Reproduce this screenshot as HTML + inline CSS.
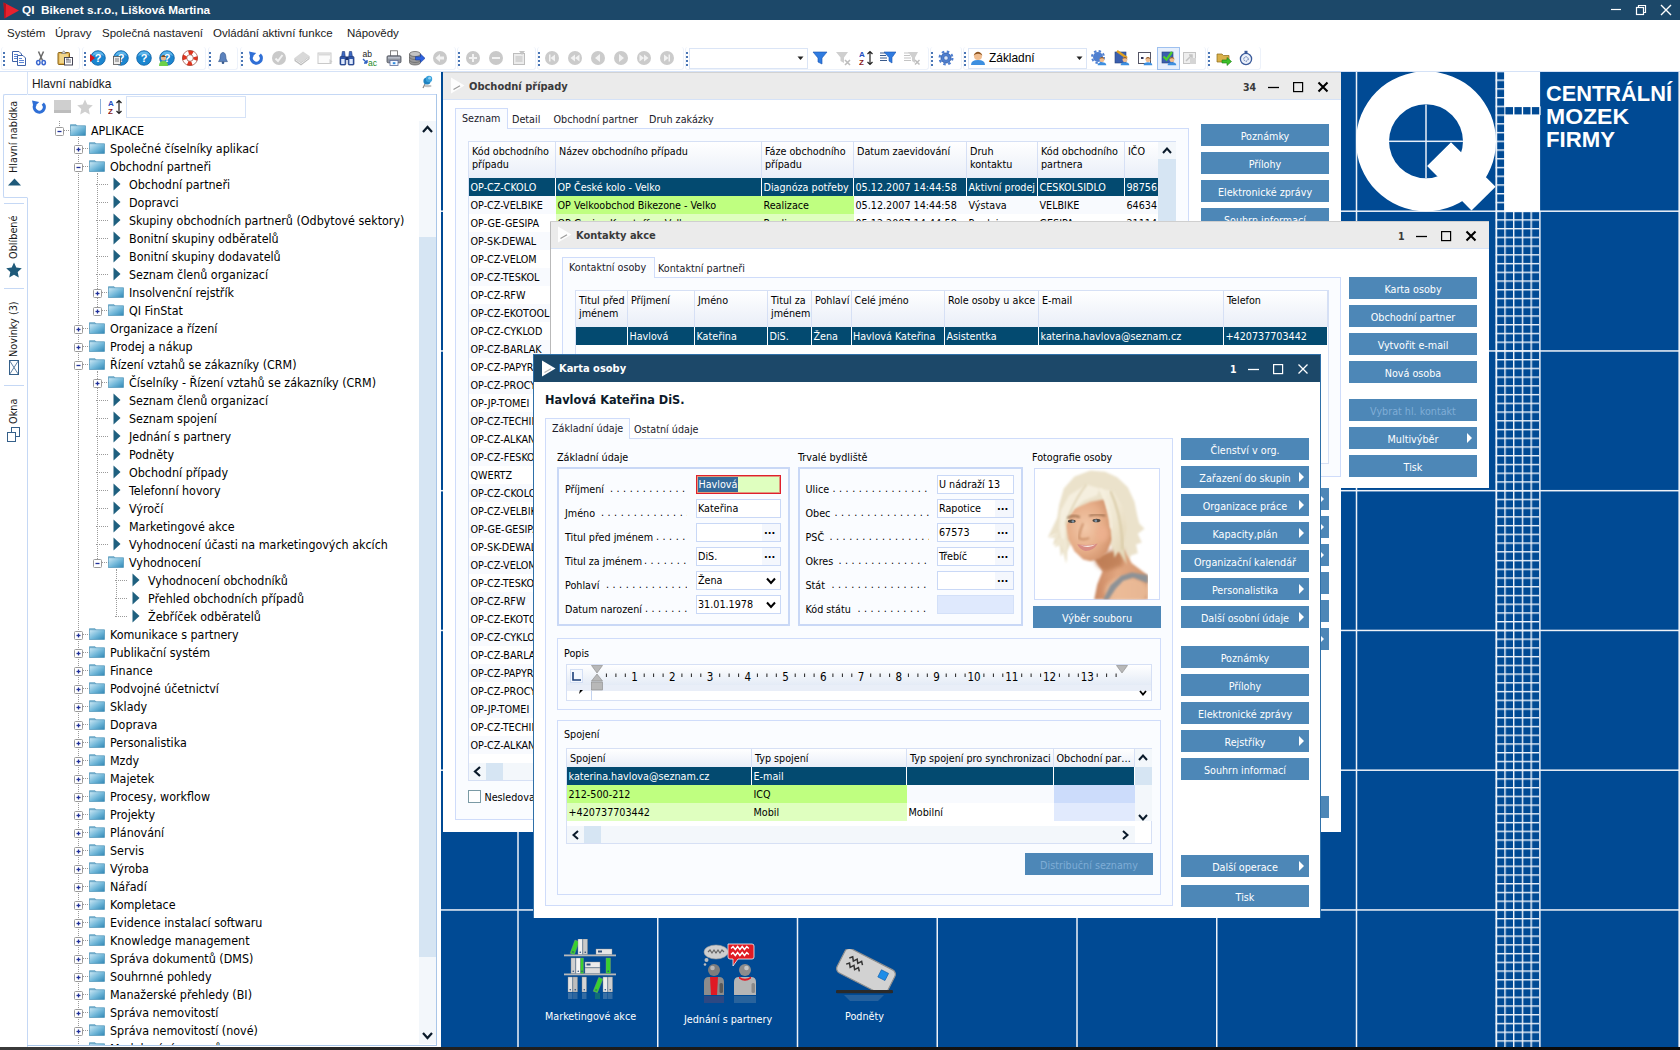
<!DOCTYPE html><html lang="cs"><head><meta charset="utf-8"><title>QI Bikenet s.r.o., Lišková Martina</title><style>
*{box-sizing:border-box;margin:0;padding:0}
html,body{width:1680px;height:1050px;overflow:hidden;background:#fff}
body{font-family:"DejaVu Sans Condensed","Liberation Sans",sans-serif;font-size:10.7px;color:#000;position:relative;line-height:1}
.a{position:absolute}
.t{position:absolute;white-space:nowrap;line-height:14px;height:14px}
.ui{font-family:"Liberation Sans",sans-serif;font-size:11.8px}
.btn{position:absolute;background:#4d87b7;color:#fff;text-align:center;height:22px;line-height:25px;white-space:nowrap;overflow:hidden}
.btn.dis{color:#7fadd6}
.btn i{position:absolute;right:5px;top:6px;width:0;height:0;border-left:5px solid #fff;border-top:5px solid transparent;border-bottom:5px solid transparent}
.win{position:absolute;background:#fff;overflow:hidden}
.pan{position:absolute;background:#fafcff;border:1px solid #cfdcfa}
.tab{position:absolute;background:#fafcff;border:1px solid #cfdcfa;border-bottom:none}
.gb{position:absolute;border:2px solid #c9d8f6;background:#fafcff}
.inp{position:absolute;background:#fff;border:1px solid #c9d8f6;height:19px;line-height:17.5px;padding-left:1px;white-space:nowrap;overflow:hidden}
.hd{position:absolute;background:linear-gradient(#ffffff,#e9eef8);border-right:1px solid #d6e0f5;padding:3px 0 0 3px;line-height:13px;overflow:hidden;white-space:nowrap}
.cell{position:absolute;height:18px;line-height:20px;padding-left:1.5px;white-space:nowrap;overflow:hidden}
.sel{background:#034a70;color:#fff;border-right:1px solid #fff}
.g1{background:#bfff80}
.g2{background:#dfffbf}
.dots{position:absolute;letter-spacing:3.5px;color:#000;white-space:nowrap;overflow:hidden;line-height:14px;height:14px}
</style></head><body>
<div class="a" style="left:0px;top:0px;width:1680px;height:20px;background:#1c4869"></div>
<svg class="a" style="left:2px;top:2px" width="18" height="17" viewBox="0 0 18 17"><path d="M1.5 0.5 L17 8.5 L2.5 16.5 Z" fill="#e8212e"/><path d="M1.5 0.5 L4 1.8 L3.5 15.9 L2.5 16.5Z" fill="#b3121d"/></svg>
<div class="t ui" style="left:22px;top:3px;color:#fff;font-weight:bold;font-size:11.8px">QI&nbsp; Bikenet s.r.o., Lišková Martina</div>
<svg class="a" style="left:1600px;top:0" width="80" height="20" viewBox="0 0 80 20" fill="none" stroke="#fff" stroke-width="1.2"><path d="M11 9.5 H21"/><rect x="36.5" y="7.5" width="7" height="7"/><path d="M38.5 7.5 V5.5 H45.5 V12.5 H43.5"/><path d="M61 5 L71 15 M71 5 L61 15" stroke-width="1.4"/></svg>
<div class="a" style="left:0px;top:20px;width:1680px;height:26px;background:#fff"></div>
<div class="t ui" style="left:7px;top:26px;font-size:11.5px;color:#1a1a1a">Systém</div>
<div class="t ui" style="left:55px;top:26px;font-size:11.5px;color:#1a1a1a">Úpravy</div>
<div class="t ui" style="left:102px;top:26px;font-size:11.5px;color:#1a1a1a">Společná nastavení</div>
<div class="t ui" style="left:213px;top:26px;font-size:11.5px;color:#1a1a1a">Ovládání aktivní funkce</div>
<div class="t ui" style="left:347px;top:26px;font-size:11.5px;color:#1a1a1a">Nápovědy</div>
<div class="a" style="left:0px;top:46px;width:1680px;height:25px;background:#fff"></div>
<div class="a" style="left:0px;top:71px;width:1680px;height:1px;background:#d5e2f7"></div>
<div class="a" style="left:1px;top:47px;width:79px;height:23px;border:1px solid #edf2fa;border-radius:3px;border-top:none;background:#fff"></div>
<div class="a" style="left:82px;top:47px;width:124px;height:23px;border:1px solid #edf2fa;border-radius:3px;border-top:none;background:#fff"></div>
<div class="a" style="left:208px;top:47px;width:30px;height:23px;border:1px solid #edf2fa;border-radius:3px;border-top:none;background:#fff"></div>
<div class="a" style="left:240px;top:47px;width:216px;height:23px;border:1px solid #edf2fa;border-radius:3px;border-top:none;background:#fff"></div>
<div class="a" style="left:457px;top:47px;width:79px;height:23px;border:1px solid #edf2fa;border-radius:3px;border-top:none;background:#fff"></div>
<div class="a" style="left:537px;top:47px;width:147px;height:23px;border:1px solid #edf2fa;border-radius:3px;border-top:none;background:#fff"></div>
<div class="a" style="left:685px;top:47px;width:244px;height:23px;border:1px solid #edf2fa;border-radius:3px;border-top:none;background:#fff"></div>
<div class="a" style="left:930px;top:47px;width:32px;height:23px;border:1px solid #edf2fa;border-radius:3px;border-top:none;background:#fff"></div>
<div class="a" style="left:963px;top:47px;width:243px;height:23px;border:1px solid #edf2fa;border-radius:3px;border-top:none;background:#fff"></div>
<div class="a" style="left:1207px;top:47px;width:54px;height:23px;border:1px solid #edf2fa;border-radius:3px;border-top:none;background:#fff"></div>
<svg class="a" style="left:3px;top:51px" width="3" height="16"><g fill="#4a76b5"><rect x="0" y="1" width="2" height="2"/><rect x="0" y="5" width="2" height="2"/><rect x="0" y="9" width="2" height="2"/><rect x="0" y="13" width="2" height="2"/></g></svg>
<svg class="a" style="left:84px;top:51px" width="3" height="16"><g fill="#4a76b5"><rect x="0" y="1" width="2" height="2"/><rect x="0" y="5" width="2" height="2"/><rect x="0" y="9" width="2" height="2"/><rect x="0" y="13" width="2" height="2"/></g></svg>
<svg class="a" style="left:209px;top:51px" width="3" height="16"><g fill="#4a76b5"><rect x="0" y="1" width="2" height="2"/><rect x="0" y="5" width="2" height="2"/><rect x="0" y="9" width="2" height="2"/><rect x="0" y="13" width="2" height="2"/></g></svg>
<svg class="a" style="left:241px;top:51px" width="3" height="16"><g fill="#4a76b5"><rect x="0" y="1" width="2" height="2"/><rect x="0" y="5" width="2" height="2"/><rect x="0" y="9" width="2" height="2"/><rect x="0" y="13" width="2" height="2"/></g></svg>
<svg class="a" style="left:458px;top:51px" width="3" height="16"><g fill="#4a76b5"><rect x="0" y="1" width="2" height="2"/><rect x="0" y="5" width="2" height="2"/><rect x="0" y="9" width="2" height="2"/><rect x="0" y="13" width="2" height="2"/></g></svg>
<svg class="a" style="left:538px;top:51px" width="3" height="16"><g fill="#4a76b5"><rect x="0" y="1" width="2" height="2"/><rect x="0" y="5" width="2" height="2"/><rect x="0" y="9" width="2" height="2"/><rect x="0" y="13" width="2" height="2"/></g></svg>
<svg class="a" style="left:686px;top:51px" width="3" height="16"><g fill="#4a76b5"><rect x="0" y="1" width="2" height="2"/><rect x="0" y="5" width="2" height="2"/><rect x="0" y="9" width="2" height="2"/><rect x="0" y="13" width="2" height="2"/></g></svg>
<svg class="a" style="left:931px;top:51px" width="3" height="16"><g fill="#4a76b5"><rect x="0" y="1" width="2" height="2"/><rect x="0" y="5" width="2" height="2"/><rect x="0" y="9" width="2" height="2"/><rect x="0" y="13" width="2" height="2"/></g></svg>
<svg class="a" style="left:964px;top:51px" width="3" height="16"><g fill="#4a76b5"><rect x="0" y="1" width="2" height="2"/><rect x="0" y="5" width="2" height="2"/><rect x="0" y="9" width="2" height="2"/><rect x="0" y="13" width="2" height="2"/></g></svg>
<svg class="a" style="left:1208px;top:51px" width="3" height="16"><g fill="#4a76b5"><rect x="0" y="1" width="2" height="2"/><rect x="0" y="5" width="2" height="2"/><rect x="0" y="9" width="2" height="2"/><rect x="0" y="13" width="2" height="2"/></g></svg>
<svg class="a" style="left:11.0px;top:50.0px" width="16" height="16" viewBox="0 0 16 16"><path d="M1.5 1.5 H8 L10.5 4 V11.5 H1.5Z" fill="#fff" stroke="#3f62a8"/><path d="M3 4.5h4M3 6.5h6M3 8.5h6" stroke="#5b85d6"/><path d="M6.5 5.5 H12 L14.5 8 V15.5 H6.5Z" fill="#fff" stroke="#3f62a8"/><path d="M8 8.5h3M8 10.5h5M8 12.5h5" stroke="#5b85d6"/></svg>
<svg class="a" style="left:33.0px;top:50.0px" width="16" height="16" viewBox="0 0 16 16"><path d="M5.5 1.5 L9.5 10.5 M10.5 1.5 L6.5 10.5" stroke="#6a6a6a" stroke-width="1.5" fill="none"/><ellipse cx="5.3" cy="12.6" rx="1.7" ry="2.2" fill="none" stroke="#3a67cf" stroke-width="1.5"/><ellipse cx="10.7" cy="12.6" rx="1.7" ry="2.2" fill="none" stroke="#3a67cf" stroke-width="1.5"/></svg>
<svg class="a" style="left:57.0px;top:50.0px" width="16" height="16" viewBox="0 0 16 16"><rect x="1" y="2.5" width="11.5" height="12" rx="1" fill="#e0b050" stroke="#8a6417"/><rect x="2.5" y="4" width="8.5" height="9" fill="#f0d58a"/><path d="M4.5 3.5 L6.7 0.8 L9 3.5Z" fill="#ddd" stroke="#777" stroke-width=".7"/><rect x="7.5" y="7.5" width="8" height="7.5" fill="#fff" stroke="#445"/><path d="M9 10h5M9 12h5" stroke="#667" /><rect x="9" y="8.6" width="3" height="1" fill="#667"/></svg>
<svg class="a" style="left:90.0px;top:50.0px" width="16" height="16" viewBox="0 0 16 16"><defs></defs><circle cx="8" cy="8" r="7.3" fill="#1b86d0"/><circle cx="8" cy="8" r="7.3" fill="none" stroke="#0d5fa3" stroke-width="0.8"/><path d="M2 6 A6.3 6.3 0 0 1 14 6 A9 5 0 0 0 2 6Z" fill="#6fc0f0" opacity=".8"/><text x="8" y="12" font-family="Liberation Sans" font-weight="bold" font-size="11" fill="#fff" text-anchor="middle">?</text><path d="M0 4 L0 12 L5 8Z" fill="#d8141c"/></svg>
<svg class="a" style="left:113.0px;top:50.0px" width="16" height="16" viewBox="0 0 16 16"><defs></defs><circle cx="8" cy="8" r="7.3" fill="#1b86d0"/><circle cx="8" cy="8" r="7.3" fill="none" stroke="#0d5fa3" stroke-width="0.8"/><path d="M2 6 A6.3 6.3 0 0 1 14 6 A9 5 0 0 0 2 6Z" fill="#6fc0f0" opacity=".8"/><text x="8" y="12" font-family="Liberation Sans" font-weight="bold" font-size="11" fill="#fff" text-anchor="middle">?</text><rect x="0.5" y="6.5" width="7" height="8" fill="#eee" stroke="#555" stroke-width=".8"/><path d="M2 9h4M2 11h4" stroke="#555" stroke-width=".8"/></svg>
<svg class="a" style="left:136.0px;top:50.0px" width="16" height="16" viewBox="0 0 16 16"><defs></defs><circle cx="8" cy="8" r="7.3" fill="#1b86d0"/><circle cx="8" cy="8" r="7.3" fill="none" stroke="#0d5fa3" stroke-width="0.8"/><path d="M2 6 A6.3 6.3 0 0 1 14 6 A9 5 0 0 0 2 6Z" fill="#6fc0f0" opacity=".8"/><text x="8" y="12" font-family="Liberation Sans" font-weight="bold" font-size="11" fill="#fff" text-anchor="middle">?</text></svg>
<svg class="a" style="left:159.0px;top:50.0px" width="16" height="16" viewBox="0 0 16 16"><defs></defs><circle cx="8" cy="8" r="7.3" fill="#1b86d0"/><circle cx="8" cy="8" r="7.3" fill="none" stroke="#0d5fa3" stroke-width="0.8"/><path d="M2 6 A6.3 6.3 0 0 1 14 6 A9 5 0 0 0 2 6Z" fill="#6fc0f0" opacity=".8"/><text x="8" y="12" font-family="Liberation Sans" font-weight="bold" font-size="11" fill="#fff" text-anchor="middle">?</text><circle cx="4.5" cy="8" r="2.6" fill="#e8b58a"/><path d="M0 16 Q0 11 4.5 11 Q9 11 9 16Z" fill="#6dd04a"/><path d="M2 7 Q4.5 3 7 7" fill="#7a4a20"/></svg>
<svg class="a" style="left:182.0px;top:50.0px" width="16" height="16" viewBox="0 0 16 16"><circle cx="8" cy="8" r="5.5" fill="none" stroke="#fff" stroke-width="4.2"/><circle cx="8" cy="8" r="5.5" fill="none" stroke="#e0341f" stroke-width="4.2" stroke-dasharray="4.32 4.32" stroke-dashoffset="2.16"/><circle cx="8" cy="8" r="7.6" fill="none" stroke="#8a2a1a" stroke-width=".6"/><circle cx="8" cy="8" r="3.3" fill="none" stroke="#8a2a1a" stroke-width=".6"/></svg>
<svg class="a" style="left:215.0px;top:50.0px" width="16" height="16" viewBox="0 0 16 16"><path d="M8 2.5 C5.2 2.5 5.2 6.5 5 9 L3.6 11.6 H12.4 L11 9 C10.8 6.5 10.8 2.5 8 2.5Z" fill="#5b82bd" stroke="#35598f" stroke-width=".7"/><circle cx="8" cy="12.8" r="1.3" fill="#35598f"/></svg>
<svg class="a" style="left:248.0px;top:50.0px" width="16" height="16" viewBox="0 0 16 16"><path d="M4.3 5.2 A5 5 0 1 0 11.8 4.6" fill="none" stroke="#2f6fd6" stroke-width="3.2"/><path d="M1 1.5 L8.2 3 L2.6 8.4Z" fill="#2f6fd6"/></svg>
<svg class="a" style="left:271.0px;top:50.0px" width="16" height="16" viewBox="0 0 16 16"><circle cx="8" cy="8" r="7" fill="#c9c9c9"/><path d="M4.5 8.5 L7 11 L11.5 5" stroke="#f2f2f2" stroke-width="2" fill="none"/></svg>
<svg class="a" style="left:294.0px;top:50.0px" width="16" height="16" viewBox="0 0 16 16"><path d="M0.5 8 L9 1.5 L15.5 6 L7 12.5Z" fill="#d9d9d9"/><path d="M0.5 8 L7 12.5 L15.5 6 V9 L7 15.5 L0.5 11Z" fill="#bdbdbd"/><path d="M1.5 9.7 L7 13.6 L14.8 7.8" stroke="#ececec" stroke-width="1" fill="none"/></svg>
<svg class="a" style="left:317.0px;top:50.0px" width="16" height="16" viewBox="0 0 16 16"><rect x="1" y="3" width="13" height="10.5" fill="#fbfbfb" stroke="#c9c9c9"/><rect x="1.5" y="3.5" width="12" height="2" fill="#d9d9d9"/><path d="M12.5 9 L15.5 11.5 L12.5 14Z" fill="#cfcfcf"/></svg>
<svg class="a" style="left:339.0px;top:50.0px" width="16" height="16" viewBox="0 0 16 16"><rect x="1" y="6.5" width="5.8" height="8.5" rx="1" fill="#2f55a8" stroke="#1b3474" stroke-width=".7"/><rect x="9.2" y="6.5" width="5.8" height="8.5" rx="1" fill="#2f55a8" stroke="#1b3474" stroke-width=".7"/><path d="M2.6 6.5 L3.4 1.5 H5.6 L6.2 6.5Z M9.8 6.5 L10.4 1.5 H12.6 L13.4 6.5Z" fill="#3f6ac4" stroke="#1b3474" stroke-width=".6"/><rect x="6.6" y="6.5" width="2.8" height="3.5" fill="#1b3474"/><rect x="2.2" y="9" width="3.4" height="5" fill="#dfe9fb"/><rect x="10.4" y="9" width="3.4" height="5" fill="#dfe9fb"/></svg>
<svg class="a" style="left:362.0px;top:50.0px" width="16" height="16" viewBox="0 0 16 16"><text x="0.5" y="7" font-family="Liberation Sans" font-size="8.5" fill="#222">ab</text><text x="6" y="15.5" font-family="Liberation Sans" font-size="8.5" fill="#1a8a2a">ac</text><path d="M1 9 L5 13 M5 13 V10 M5 13 H2" stroke="#2f62c4" stroke-width="1.4" fill="none"/></svg>
<svg class="a" style="left:386.0px;top:50.0px" width="16" height="16" viewBox="0 0 16 16"><rect x="4.5" y="0.8" width="7" height="5.5" fill="#fff" stroke="#666" stroke-width=".8"/><rect x="1" y="5.8" width="14" height="7" rx="1.2" fill="#8f949e" stroke="#4a4e58" stroke-width=".8"/><rect x="2" y="7" width="12" height="1.6" fill="#b9bec8"/><rect x="4" y="10.5" width="8" height="5" fill="#f4f8ff" stroke="#5a6a9a" stroke-width=".8"/><rect x="6.8" y="12.2" width="2.6" height="2" fill="#2f8ae0"/></svg>
<svg class="a" style="left:409.0px;top:50.0px" width="16" height="16" viewBox="0 0 16 16"><path d="M0.5 4 V12.5 A5.5 2.5 0 0 0 11.5 12.5 V4" fill="#9a9a9a" stroke="#5a5a5a" stroke-width=".7"/><ellipse cx="6" cy="4" rx="5.5" ry="2.5" fill="#c4c4c4" stroke="#5a5a5a" stroke-width=".7"/><path d="M0.5 7 A5.5 2.5 0 0 0 11.5 7 M0.5 10 A5.5 2.5 0 0 0 11.5 10" fill="none" stroke="#666" stroke-width=".7"/><path d="M6.5 6.7 H11.5 V4 L16 8.3 L11.5 12.6 V10 H6.5Z" fill="#2d62e0" stroke="#143a9a" stroke-width=".6"/></svg>
<svg class="a" style="left:432.0px;top:50.0px" width="16" height="16" viewBox="0 0 16 16"><circle cx="8" cy="8" r="7" fill="#c9c9c9"/><path d="M3.5 8 L8 4 V6.5 H12 V9.5 H8 V12Z" fill="#f2f2f2"/></svg>
<svg class="a" style="left:465.0px;top:50.0px" width="16" height="16" viewBox="0 0 16 16"><circle cx="8" cy="8" r="7" fill="#c9c9c9"/><path d="M4 8H12M8 4V12" stroke="#f2f2f2" stroke-width="2"/></svg>
<svg class="a" style="left:488.0px;top:50.0px" width="16" height="16" viewBox="0 0 16 16"><circle cx="8" cy="8" r="7" fill="#c9c9c9"/><path d="M4 8H12" stroke="#f2f2f2" stroke-width="2"/></svg>
<svg class="a" style="left:511.0px;top:50.0px" width="16" height="16" viewBox="0 0 16 16"><rect x="2.5" y="3.5" width="11" height="11" fill="#ececec" stroke="#bdbdbd"/><path d="M4.5 7h7M4.5 9h7M4.5 11h7" stroke="#bdbdbd"/><path d="M8 1 L14 1 L11 5Z" fill="#c4c4c4"/></svg>
<svg class="a" style="left:544.0px;top:50.0px" width="16" height="16" viewBox="0 0 16 16"><circle cx="8" cy="8" r="7" fill="#cbcbcb"/><path d="M11 4.5 V11.5 L6.5 8Z" fill="#f2f2f2"/><rect x="5" y="4.5" width="1.5" height="7" fill="#f2f2f2"/></svg>
<svg class="a" style="left:567.0px;top:50.0px" width="16" height="16" viewBox="0 0 16 16"><circle cx="8" cy="8" r="7" fill="#cbcbcb"/><path d="M8 4.5 V11.5 L3.5 8Z M12.5 4.5 V11.5 L8 8Z" fill="#f2f2f2"/></svg>
<svg class="a" style="left:590.0px;top:50.0px" width="16" height="16" viewBox="0 0 16 16"><circle cx="8" cy="8" r="7" fill="#cbcbcb"/><path d="M10 4 V12 L5 8Z" fill="#f2f2f2"/></svg>
<svg class="a" style="left:613.0px;top:50.0px" width="16" height="16" viewBox="0 0 16 16"><circle cx="8" cy="8" r="7" fill="#cbcbcb"/><path d="M6 4 V12 L11 8Z" fill="#f2f2f2"/></svg>
<svg class="a" style="left:636.0px;top:50.0px" width="16" height="16" viewBox="0 0 16 16"><circle cx="8" cy="8" r="7" fill="#cbcbcb"/><path d="M8 4.5 V11.5 L12.5 8Z M3.5 4.5 V11.5 L8 8Z" fill="#f2f2f2"/></svg>
<svg class="a" style="left:659.0px;top:50.0px" width="16" height="16" viewBox="0 0 16 16"><circle cx="8" cy="8" r="7" fill="#cbcbcb"/><path d="M5 4.5 V11.5 L9.5 8Z" fill="#f2f2f2"/><rect x="9.5" y="4.5" width="1.5" height="7" fill="#f2f2f2"/></svg>
<div class="a" style="left:689px;top:48px;width:119px;height:21px;border:1px solid #dbe5f6;background:#fff"></div>
<svg class="a" style="left:797px;top:56px" width="8" height="5"><path d="M0.5 0.5 H6.5 L3.5 4Z" fill="#222"/></svg>
<svg class="a" style="left:812.0px;top:50.0px" width="16" height="16" viewBox="0 0 16 16"><path d="M1 2 H15 L10 8 V14 L6 12 V8Z" fill="#2f7be0" stroke="#1552b0" stroke-width=".6"/></svg>
<svg class="a" style="left:835.0px;top:50.0px" width="16" height="16" viewBox="0 0 16 16"><path d="M1 2 H13 L9 7.5 V13 L5.5 11 V7.5Z" fill="#cfcfcf"/><path d="M10 10 L15 15 M15 10 L10 15" stroke="#bdbdbd" stroke-width="1.6"/></svg>
<svg class="a" style="left:859.0px;top:50.0px" width="16" height="16" viewBox="0 0 16 16"><text x="0" y="7" font-family="Liberation Sans" font-weight="bold" font-size="8" fill="#1f4fc0">A</text><text x="0" y="15" font-family="Liberation Sans" font-weight="bold" font-size="8" fill="#8a1a1a">Z</text><path d="M11 1.5 V14.5 M8.5 4 L11 1.5 L13.5 4 M8.5 12 L11 14.5 L13.5 12" stroke="#222" stroke-width="1.2" fill="none"/></svg>
<svg class="a" style="left:880.0px;top:50.0px" width="16" height="16" viewBox="0 0 16 16"><path d="M4 2 H16 L12 7.5 V13 L9 11 V7.5Z" fill="#2f7be0" stroke="#1552b0" stroke-width=".6"/><path d="M0 3h5M0 5.5h6M0 8h7M0 10.5h7" stroke="#3a5a8a" stroke-width="1.2"/></svg>
<svg class="a" style="left:904.0px;top:50.0px" width="16" height="16" viewBox="0 0 16 16"><path d="M4 2 H14 L11 7.5 V13 L8 11 V7.5Z" fill="#cfcfcf"/><path d="M0 3h5M0 5.5h6M0 8h7M0 10.5h7" stroke="#c4c4c4" stroke-width="1.2"/><path d="M11 10 L15.5 14.5 M15.5 10 L11 14.5" stroke="#bdbdbd" stroke-width="1.5"/></svg>
<svg class="a" style="left:938.0px;top:50.0px" width="16" height="16" viewBox="0 0 16 16"><circle cx="8" cy="8" r="5" fill="#4f7fd0" stroke="#2a55a0" stroke-width=".8"/><circle cx="8" cy="8" r="6.4" fill="none" stroke="#4f7fd0" stroke-width="2.2" stroke-dasharray="2.5 2.53"/><circle cx="8" cy="8" r="2.2" fill="#dbe7fa" stroke="#2a55a0" stroke-width=".6"/></svg>
<div class="a" style="left:968px;top:48px;width:119px;height:21px;border:1px solid #dbe5f6;background:#fff"></div>
<svg class="a" style="left:970.0px;top:50.0px" width="16" height="16" viewBox="0 0 16 16"><circle cx="8" cy="6" r="4" fill="#f0bd8f"/><path d="M3.5 5.5 Q8 -2 12.5 5.5 Q10 3.5 8 3.8 Q6 3.5 3.5 5.5Z" fill="#8a5320"/><path d="M1 15 Q1 10 8 10 Q15 10 15 15Z" fill="#3d8fe0"/></svg>
<div class="t ui" style="left:989px;top:51px;font-size:11.9px">Základní</div>
<svg class="a" style="left:1076px;top:56px" width="8" height="5"><path d="M0.5 0.5 H6.5 L3.5 4Z" fill="#222"/></svg>
<svg class="a" style="left:1091.0px;top:50.0px" width="16" height="16" viewBox="0 0 16 16"><circle cx="7" cy="7" r="5" fill="#4f7fd0"/><circle cx="7" cy="7" r="6" fill="none" stroke="#4f7fd0" stroke-width="2" stroke-dasharray="2.4 2.3"/><g transform="translate(6,6) scale(.62)"><circle cx="8" cy="6" r="4" fill="#f0bd8f"/><path d="M3.5 5.5 Q8 -2 12.5 5.5 Q10 3.5 8 3.8 Q6 3.5 3.5 5.5Z" fill="#8a5320"/><path d="M1 15 Q1 10 8 10 Q15 10 15 15Z" fill="#3d8fe0"/></g></svg>
<svg class="a" style="left:1114.0px;top:50.0px" width="16" height="16" viewBox="0 0 16 16"><rect x="1" y="2" width="11" height="11" fill="#3b5fae" stroke="#24407e" stroke-width=".6"/><path d="M3 1 L13 8" stroke="#e0a020" stroke-width="2.4"/><g transform="translate(6,6) scale(.62)"><circle cx="8" cy="6" r="4" fill="#f0bd8f"/><path d="M3.5 5.5 Q8 -2 12.5 5.5 Q10 3.5 8 3.8 Q6 3.5 3.5 5.5Z" fill="#8a5320"/><path d="M1 15 Q1 10 8 10 Q15 10 15 15Z" fill="#3d8fe0"/></g></svg>
<svg class="a" style="left:1137.0px;top:50.0px" width="16" height="16" viewBox="0 0 16 16"><rect x="1.5" y="2.5" width="12" height="11" fill="#fff" stroke="#556" /><rect x="4" y="7" width="2.5" height="2" fill="#335"/><g transform="translate(6,6) scale(.62)"><circle cx="8" cy="6" r="4" fill="#f0bd8f"/><path d="M3.5 5.5 Q8 -2 12.5 5.5 Q10 3.5 8 3.8 Q6 3.5 3.5 5.5Z" fill="#8a5320"/><path d="M1 15 Q1 10 8 10 Q15 10 15 15Z" fill="#3d8fe0"/></g></svg>
<div class="a" style="left:1157px;top:47px;width:23px;height:23px;border:1px solid #9ec0ef;background:#e6effc"></div>
<svg class="a" style="left:1161.0px;top:50.0px" width="16" height="16" viewBox="0 0 16 16"><rect x="1" y="2" width="11" height="11" fill="#3b5fae" stroke="#24407e" stroke-width=".6"/><path d="M2.5 6.5 L5.5 9.5 L11 2" stroke="#4bd02a" stroke-width="2.2" fill="none"/><g transform="translate(6,6) scale(.62)"><circle cx="8" cy="6" r="4" fill="#f0bd8f"/><path d="M3.5 5.5 Q8 -2 12.5 5.5 Q10 3.5 8 3.8 Q6 3.5 3.5 5.5Z" fill="#8a5320"/><path d="M1 15 Q1 10 8 10 Q15 10 15 15Z" fill="#3d8fe0"/></g></svg>
<svg class="a" style="left:1182.0px;top:50.0px" width="16" height="16" viewBox="0 0 16 16"><rect x="1.5" y="2.5" width="12" height="11" fill="#eee" stroke="#c4c4c4"/><path d="M4 11 L10 5 M7 5 H10 V8" stroke="#c4c4c4" stroke-width="1.5" fill="none"/><rect x="8" y="8" width="6" height="6" fill="#d5d5d5"/></svg>
<svg class="a" style="left:1216.0px;top:50.0px" width="16" height="16" viewBox="0 0 16 16"><path d="M1 4 H6 L7.5 5.5 H13 V12 H1Z" fill="#d9b04a" stroke="#8a6a17" stroke-width=".7"/><path d="M6 10 H11 V7.5 L15.5 11.5 L11 15.5 V13 H6Z" fill="#3cc02a" stroke="#1a7a12" stroke-width=".6"/></svg>
<svg class="a" style="left:1238.0px;top:50.0px" width="16" height="16" viewBox="0 0 16 16"><circle cx="8" cy="9" r="5.6" fill="#eaf0fa" stroke="#3a5a9a" stroke-width="1.3"/><rect x="6.5" y="0.8" width="3" height="2.4" fill="#3a5a9a"/><circle cx="8" cy="9" r="2.2" fill="none" stroke="#3a5a9a" stroke-width="1" stroke-dasharray="1.2 1"/></svg>
<div class="a" style="left:0px;top:72px;width:441px;height:975px;background:#fff"></div>
<div class="t ui" style="left:32px;top:77px;font-size:11.9px;color:#1a1a1a">Hlavní nabídka</div>
<div class="a" style="left:27px;top:72px;width:1px;height:22px;background:#d5e2f7"></div>
<div class="a" style="left:27px;top:94px;width:410px;height:1px;background:#c5d8f5"></div>
<svg class="a" style="left:422px;top:75px" width="12" height="14" viewBox="0 0 12 14"><path d="M3 9 L1 13" stroke="#888" stroke-width="1.2"/><ellipse cx="6" cy="11" rx="3.5" ry="1.2" fill="#999" opacity=".6"/><circle cx="5" cy="6" r="3.6" fill="#1f82c0"/><circle cx="7" cy="4" r="3.2" fill="#3aa2dc"/><circle cx="7.6" cy="3.2" r="1.4" fill="#8fd0f2"/></svg>
<div class="a" style="left:27px;top:94px;width:1px;height:953px;background:#c5d8f5"></div>
<div class="a" style="left:436px;top:94px;width:1px;height:952px;background:#a9c6e8"></div>
<div class="a" style="left:27px;top:1045px;width:410px;height:1px;background:#a9c6e8"></div>
<div class="a" style="left:3px;top:94px;width:25px;height:104px;border:1px solid #c5d8f5;border-right:1px solid #fff;background:#fff;border-radius:2px 0 0 2px"></div>
<div class="t" style="left:14px;top:173px;transform-origin:0 0;transform:rotate(-90deg) translate(0,-7px);font-size:10.8px;color:#1a1a1a;">Hlavní nabídka</div>
<svg class="a" style="left:8px;top:178px" width="13" height="8"><path d="M0 7.5 L6.5 0.5 L13 7.5Z" fill="#1f5a7a"/></svg>
<div class="a" style="left:4px;top:203px;width:20px;height:1px;background:#c5d8f5"></div>
<div class="a" style="left:4px;top:288px;width:20px;height:1px;background:#c5d8f5"></div>
<div class="a" style="left:4px;top:385px;width:20px;height:1px;background:#c5d8f5"></div>
<div class="t" style="left:14px;top:259px;transform-origin:0 0;transform:rotate(-90deg) translate(0,-7px);font-size:10.8px;color:#1a1a1a;">Oblíbené</div>
<svg class="a" style="left:6px;top:262px" width="16" height="16" viewBox="0 0 16 16"><path d="M8 0.5 L10.3 5.6 L15.8 6.2 L11.7 10 L12.8 15.5 L8 12.7 L3.2 15.5 L4.3 10 L0.2 6.2 L5.7 5.6Z" fill="#1f5a7a"/></svg>
<div class="t" style="left:14px;top:357px;transform-origin:0 0;transform:rotate(-90deg) translate(0,-7px);font-size:10.8px;color:#1a1a1a;">Novinky (3)</div>
<svg class="a" style="left:9px;top:360px" width="10" height="15" viewBox="0 0 10 15"><rect x=".5" y=".5" width="9" height="14" fill="#fff" stroke="#35608a"/><path d="M.5 .5 L5 7.5 L.5 14.5 M9.5 .5 L5 7.5 L9.5 14.5" fill="none" stroke="#35608a" stroke-width=".8"/></svg>
<div class="t" style="left:14px;top:424px;transform-origin:0 0;transform:rotate(-90deg) translate(0,-7px);font-size:10.8px;color:#1a1a1a;">Okna</div>
<svg class="a" style="left:7px;top:427px" width="14" height="16" viewBox="0 0 14 16"><rect x="4.5" y=".5" width="8" height="9" fill="#fff" stroke="#35608a"/><rect x=".5" y="5.5" width="8" height="9" fill="#fff" stroke="#35608a"/></svg>
<svg class="a" style="left:31px;top:99px" width="16" height="16" viewBox="0 0 16 16"><path d="M4.3 5.2 A5 5 0 1 0 11.8 4.6" fill="none" stroke="#2f6fd6" stroke-width="3.2"/><path d="M1 1.5 L8.2 3 L2.6 8.4Z" fill="#2f6fd6"/></svg>
<svg class="a" style="left:54px;top:100px" width="17" height="14" viewBox="0 0 17 14"><rect x="0" y="0" width="17" height="13" fill="#cfcfcf"/><rect x="0" y="10" width="17" height="3" fill="#bdbdbd"/></svg>
<svg class="a" style="left:77px;top:99px" width="16" height="16" viewBox="0 0 16 16"><path d="M8 0.5 L10.3 5.6 L15.8 6.2 L11.7 10 L12.8 15.5 L8 12.7 L3.2 15.5 L4.3 10 L0.2 6.2 L5.7 5.6Z" fill="#d0d0d0"/></svg>
<div class="a" style="left:100px;top:99px;width:1px;height:15px;background:#8fb0d8"></div>
<svg class="a" style="left:108px;top:99px" width="16" height="16" viewBox="0 0 16 16"><text x="0" y="7" font-family="Liberation Sans" font-weight="bold" font-size="8" fill="#1f4fc0">A</text><text x="0" y="15" font-family="Liberation Sans" font-weight="bold" font-size="8" fill="#8a1a1a">Z</text><path d="M11 1.5 V14.5 M8.5 4 L11 1.5 L13.5 4 M8.5 12 L11 14.5 L13.5 12" stroke="#222" stroke-width="1.2" fill="none"/></svg>
<div class="a" style="left:126px;top:96px;width:120px;height:22px;border:1px solid #d5e2f7;background:#fff"></div>
<div class="a" style="left:419px;top:121px;width:17px;height:923px;background:#f3f7fb"></div>
<div class="a" style="left:419px;top:237px;width:17px;height:720px;background:#d6e5f3"></div>
<svg class="a" style="left:422px;top:125px" width="11" height="8"><path d="M1 7 L5.5 2 L10 7" fill="none" stroke="#0a1a2a" stroke-width="2.2"/></svg>
<svg class="a" style="left:422px;top:1032px" width="11" height="8"><path d="M1 1 L5.5 6 L10 1" fill="none" stroke="#0a1a2a" stroke-width="2.2"/></svg>
<svg width="0" height="0" style="position:absolute"><defs><linearGradient id="fg" x1="0" y1="0" x2="1" y2="1"><stop offset="0" stop-color="#cfeaf6"/><stop offset=".55" stop-color="#6fb6d8"/><stop offset="1" stop-color="#2f86b4"/></linearGradient></defs></svg>
<div class="a" style="left:28px;top:72px;width:391px;height:973px;overflow:hidden"><div class="a" style="left:-28px;top:0px"><div class="a" style="left:59px;top:49px;width:0;height:5px;border-left:1px dotted #9a9a9a"></div><div class="a" style="left:78px;top:65px;width:0;height:907px;border-left:1px dotted #9a9a9a"></div><div class="a" style="left:97px;top:101px;width:0;height:138px;border-left:1px dotted #9a9a9a"></div><div class="a" style="left:97px;top:299px;width:0;height:192px;border-left:1px dotted #9a9a9a"></div><div class="a" style="left:116px;top:497px;width:0;height:48px;border-left:1px dotted #9a9a9a"></div><div class="a" style="left:63px;top:58px;width:8px;height:0;border-top:1px dotted #9a9a9a"></div><svg class="a"  style="left:55px;top:55px" width="9" height="9" viewBox="0 0 9 9"><rect x=".5" y=".5" width="8" height="8" rx="1" fill="#fff" stroke="#9a9a9a"/><path d="M2.5 4.5 H6.5" stroke="#1f2f9a" stroke-width="1.3"/></svg><svg class="a" style="left:70px;top:51px" width="16" height="13" viewBox="0 0 16 13"><path d="M0.5 1.5 H6 L7 3 H0.5Z" fill="#a9d3e8" stroke="#5f9fc0" stroke-width=".6"/><rect x="0.5" y="2.8" width="15" height="9.7" fill="url(#fg)" stroke="#4f94b8" stroke-width=".7"/></svg><div class="t" style="left:91px;top:50px;font-size:12.4px;line-height:17px;height:16px">APLIKACE</div><div class="a" style="left:82px;top:76px;width:8px;height:0;border-top:1px dotted #9a9a9a"></div><svg class="a"  style="left:74px;top:73px" width="9" height="9" viewBox="0 0 9 9"><rect x=".5" y=".5" width="8" height="8" rx="1" fill="#fff" stroke="#9a9a9a"/><path d="M2.5 4.5 H6.5" stroke="#1f2f9a" stroke-width="1.3"/><path d="M4.5 2.5 V6.5" stroke="#1f2f9a" stroke-width="1.3"/></svg><svg class="a" style="left:89px;top:69px" width="16" height="13" viewBox="0 0 16 13"><path d="M0.5 1.5 H6 L7 3 H0.5Z" fill="#a9d3e8" stroke="#5f9fc0" stroke-width=".6"/><rect x="0.5" y="2.8" width="15" height="9.7" fill="url(#fg)" stroke="#4f94b8" stroke-width=".7"/></svg><div class="t" style="left:110px;top:68px;font-size:12.4px;line-height:17px;height:16px">Společné číselníky aplikací</div><div class="a" style="left:82px;top:94px;width:8px;height:0;border-top:1px dotted #9a9a9a"></div><svg class="a"  style="left:74px;top:91px" width="9" height="9" viewBox="0 0 9 9"><rect x=".5" y=".5" width="8" height="8" rx="1" fill="#fff" stroke="#9a9a9a"/><path d="M2.5 4.5 H6.5" stroke="#1f2f9a" stroke-width="1.3"/></svg><svg class="a" style="left:89px;top:87px" width="16" height="13" viewBox="0 0 16 13"><path d="M0.5 1.5 H6 L7 3 H0.5Z" fill="#a9d3e8" stroke="#5f9fc0" stroke-width=".6"/><rect x="0.5" y="2.8" width="15" height="9.7" fill="url(#fg)" stroke="#4f94b8" stroke-width=".7"/></svg><div class="t" style="left:110px;top:86px;font-size:12.4px;line-height:17px;height:16px">Obchodní partneři</div><svg class="a" style="left:113px;top:105px" width="8" height="14"><path d="M0.5 0.5 L7.5 7 L0.5 13.5Z" fill="#1f607f"/></svg><div class="a" style="left:96px;top:112px;width:12px;height:0;border-top:1px dotted #9a9a9a"></div><div class="t" style="left:129px;top:104px;font-size:12.4px;line-height:17px;height:16px">Obchodní partneři</div><svg class="a" style="left:113px;top:123px" width="8" height="14"><path d="M0.5 0.5 L7.5 7 L0.5 13.5Z" fill="#1f607f"/></svg><div class="a" style="left:96px;top:130px;width:12px;height:0;border-top:1px dotted #9a9a9a"></div><div class="t" style="left:129px;top:122px;font-size:12.4px;line-height:17px;height:16px">Dopravci</div><svg class="a" style="left:113px;top:141px" width="8" height="14"><path d="M0.5 0.5 L7.5 7 L0.5 13.5Z" fill="#1f607f"/></svg><div class="a" style="left:96px;top:148px;width:12px;height:0;border-top:1px dotted #9a9a9a"></div><div class="t" style="left:129px;top:140px;font-size:12.4px;line-height:17px;height:16px">Skupiny obchodních partnerů (Odbytové sektory)</div><svg class="a" style="left:113px;top:159px" width="8" height="14"><path d="M0.5 0.5 L7.5 7 L0.5 13.5Z" fill="#1f607f"/></svg><div class="a" style="left:96px;top:166px;width:12px;height:0;border-top:1px dotted #9a9a9a"></div><div class="t" style="left:129px;top:158px;font-size:12.4px;line-height:17px;height:16px">Bonitní skupiny odběratelů</div><svg class="a" style="left:113px;top:177px" width="8" height="14"><path d="M0.5 0.5 L7.5 7 L0.5 13.5Z" fill="#1f607f"/></svg><div class="a" style="left:96px;top:184px;width:12px;height:0;border-top:1px dotted #9a9a9a"></div><div class="t" style="left:129px;top:176px;font-size:12.4px;line-height:17px;height:16px">Bonitní skupiny dodavatelů</div><svg class="a" style="left:113px;top:195px" width="8" height="14"><path d="M0.5 0.5 L7.5 7 L0.5 13.5Z" fill="#1f607f"/></svg><div class="a" style="left:96px;top:202px;width:12px;height:0;border-top:1px dotted #9a9a9a"></div><div class="t" style="left:129px;top:194px;font-size:12.4px;line-height:17px;height:16px">Seznam členů organizací</div><div class="a" style="left:101px;top:220px;width:8px;height:0;border-top:1px dotted #9a9a9a"></div><svg class="a"  style="left:93px;top:217px" width="9" height="9" viewBox="0 0 9 9"><rect x=".5" y=".5" width="8" height="8" rx="1" fill="#fff" stroke="#9a9a9a"/><path d="M2.5 4.5 H6.5" stroke="#1f2f9a" stroke-width="1.3"/><path d="M4.5 2.5 V6.5" stroke="#1f2f9a" stroke-width="1.3"/></svg><svg class="a" style="left:108px;top:213px" width="16" height="13" viewBox="0 0 16 13"><path d="M0.5 1.5 H6 L7 3 H0.5Z" fill="#a9d3e8" stroke="#5f9fc0" stroke-width=".6"/><rect x="0.5" y="2.8" width="15" height="9.7" fill="url(#fg)" stroke="#4f94b8" stroke-width=".7"/></svg><div class="t" style="left:129px;top:212px;font-size:12.4px;line-height:17px;height:16px">Insolvenční rejstřík</div><div class="a" style="left:101px;top:238px;width:8px;height:0;border-top:1px dotted #9a9a9a"></div><svg class="a"  style="left:93px;top:235px" width="9" height="9" viewBox="0 0 9 9"><rect x=".5" y=".5" width="8" height="8" rx="1" fill="#fff" stroke="#9a9a9a"/><path d="M2.5 4.5 H6.5" stroke="#1f2f9a" stroke-width="1.3"/><path d="M4.5 2.5 V6.5" stroke="#1f2f9a" stroke-width="1.3"/></svg><svg class="a" style="left:108px;top:231px" width="16" height="13" viewBox="0 0 16 13"><path d="M0.5 1.5 H6 L7 3 H0.5Z" fill="#a9d3e8" stroke="#5f9fc0" stroke-width=".6"/><rect x="0.5" y="2.8" width="15" height="9.7" fill="url(#fg)" stroke="#4f94b8" stroke-width=".7"/></svg><div class="t" style="left:129px;top:230px;font-size:12.4px;line-height:17px;height:16px">QI FinStat</div><div class="a" style="left:82px;top:256px;width:8px;height:0;border-top:1px dotted #9a9a9a"></div><svg class="a"  style="left:74px;top:253px" width="9" height="9" viewBox="0 0 9 9"><rect x=".5" y=".5" width="8" height="8" rx="1" fill="#fff" stroke="#9a9a9a"/><path d="M2.5 4.5 H6.5" stroke="#1f2f9a" stroke-width="1.3"/><path d="M4.5 2.5 V6.5" stroke="#1f2f9a" stroke-width="1.3"/></svg><svg class="a" style="left:89px;top:249px" width="16" height="13" viewBox="0 0 16 13"><path d="M0.5 1.5 H6 L7 3 H0.5Z" fill="#a9d3e8" stroke="#5f9fc0" stroke-width=".6"/><rect x="0.5" y="2.8" width="15" height="9.7" fill="url(#fg)" stroke="#4f94b8" stroke-width=".7"/></svg><div class="t" style="left:110px;top:248px;font-size:12.4px;line-height:17px;height:16px">Organizace a řízení</div><div class="a" style="left:82px;top:274px;width:8px;height:0;border-top:1px dotted #9a9a9a"></div><svg class="a"  style="left:74px;top:271px" width="9" height="9" viewBox="0 0 9 9"><rect x=".5" y=".5" width="8" height="8" rx="1" fill="#fff" stroke="#9a9a9a"/><path d="M2.5 4.5 H6.5" stroke="#1f2f9a" stroke-width="1.3"/><path d="M4.5 2.5 V6.5" stroke="#1f2f9a" stroke-width="1.3"/></svg><svg class="a" style="left:89px;top:267px" width="16" height="13" viewBox="0 0 16 13"><path d="M0.5 1.5 H6 L7 3 H0.5Z" fill="#a9d3e8" stroke="#5f9fc0" stroke-width=".6"/><rect x="0.5" y="2.8" width="15" height="9.7" fill="url(#fg)" stroke="#4f94b8" stroke-width=".7"/></svg><div class="t" style="left:110px;top:266px;font-size:12.4px;line-height:17px;height:16px">Prodej a nákup</div><div class="a" style="left:82px;top:292px;width:8px;height:0;border-top:1px dotted #9a9a9a"></div><svg class="a"  style="left:74px;top:289px" width="9" height="9" viewBox="0 0 9 9"><rect x=".5" y=".5" width="8" height="8" rx="1" fill="#fff" stroke="#9a9a9a"/><path d="M2.5 4.5 H6.5" stroke="#1f2f9a" stroke-width="1.3"/></svg><svg class="a" style="left:89px;top:285px" width="16" height="13" viewBox="0 0 16 13"><path d="M0.5 1.5 H6 L7 3 H0.5Z" fill="#a9d3e8" stroke="#5f9fc0" stroke-width=".6"/><rect x="0.5" y="2.8" width="15" height="9.7" fill="url(#fg)" stroke="#4f94b8" stroke-width=".7"/></svg><div class="t" style="left:110px;top:284px;font-size:12.4px;line-height:17px;height:16px">Řízení vztahů se zákazníky (CRM)</div><div class="a" style="left:101px;top:310px;width:8px;height:0;border-top:1px dotted #9a9a9a"></div><svg class="a"  style="left:93px;top:307px" width="9" height="9" viewBox="0 0 9 9"><rect x=".5" y=".5" width="8" height="8" rx="1" fill="#fff" stroke="#9a9a9a"/><path d="M2.5 4.5 H6.5" stroke="#1f2f9a" stroke-width="1.3"/><path d="M4.5 2.5 V6.5" stroke="#1f2f9a" stroke-width="1.3"/></svg><svg class="a" style="left:108px;top:303px" width="16" height="13" viewBox="0 0 16 13"><path d="M0.5 1.5 H6 L7 3 H0.5Z" fill="#a9d3e8" stroke="#5f9fc0" stroke-width=".6"/><rect x="0.5" y="2.8" width="15" height="9.7" fill="url(#fg)" stroke="#4f94b8" stroke-width=".7"/></svg><div class="t" style="left:129px;top:302px;font-size:12.4px;line-height:17px;height:16px">Číselníky - Řízení vztahů se zákazníky (CRM)</div><svg class="a" style="left:113px;top:321px" width="8" height="14"><path d="M0.5 0.5 L7.5 7 L0.5 13.5Z" fill="#1f607f"/></svg><div class="a" style="left:96px;top:328px;width:12px;height:0;border-top:1px dotted #9a9a9a"></div><div class="t" style="left:129px;top:320px;font-size:12.4px;line-height:17px;height:16px">Seznam členů organizací</div><svg class="a" style="left:113px;top:339px" width="8" height="14"><path d="M0.5 0.5 L7.5 7 L0.5 13.5Z" fill="#1f607f"/></svg><div class="a" style="left:96px;top:346px;width:12px;height:0;border-top:1px dotted #9a9a9a"></div><div class="t" style="left:129px;top:338px;font-size:12.4px;line-height:17px;height:16px">Seznam spojení</div><svg class="a" style="left:113px;top:357px" width="8" height="14"><path d="M0.5 0.5 L7.5 7 L0.5 13.5Z" fill="#1f607f"/></svg><div class="a" style="left:96px;top:364px;width:12px;height:0;border-top:1px dotted #9a9a9a"></div><div class="t" style="left:129px;top:356px;font-size:12.4px;line-height:17px;height:16px">Jednání s partnery</div><svg class="a" style="left:113px;top:375px" width="8" height="14"><path d="M0.5 0.5 L7.5 7 L0.5 13.5Z" fill="#1f607f"/></svg><div class="a" style="left:96px;top:382px;width:12px;height:0;border-top:1px dotted #9a9a9a"></div><div class="t" style="left:129px;top:374px;font-size:12.4px;line-height:17px;height:16px">Podněty</div><svg class="a" style="left:113px;top:393px" width="8" height="14"><path d="M0.5 0.5 L7.5 7 L0.5 13.5Z" fill="#1f607f"/></svg><div class="a" style="left:96px;top:400px;width:12px;height:0;border-top:1px dotted #9a9a9a"></div><div class="t" style="left:129px;top:392px;font-size:12.4px;line-height:17px;height:16px">Obchodní případy</div><svg class="a" style="left:113px;top:411px" width="8" height="14"><path d="M0.5 0.5 L7.5 7 L0.5 13.5Z" fill="#1f607f"/></svg><div class="a" style="left:96px;top:418px;width:12px;height:0;border-top:1px dotted #9a9a9a"></div><div class="t" style="left:129px;top:410px;font-size:12.4px;line-height:17px;height:16px">Telefonní hovory</div><svg class="a" style="left:113px;top:429px" width="8" height="14"><path d="M0.5 0.5 L7.5 7 L0.5 13.5Z" fill="#1f607f"/></svg><div class="a" style="left:96px;top:436px;width:12px;height:0;border-top:1px dotted #9a9a9a"></div><div class="t" style="left:129px;top:428px;font-size:12.4px;line-height:17px;height:16px">Výročí</div><svg class="a" style="left:113px;top:447px" width="8" height="14"><path d="M0.5 0.5 L7.5 7 L0.5 13.5Z" fill="#1f607f"/></svg><div class="a" style="left:96px;top:454px;width:12px;height:0;border-top:1px dotted #9a9a9a"></div><div class="t" style="left:129px;top:446px;font-size:12.4px;line-height:17px;height:16px">Marketingové akce</div><svg class="a" style="left:113px;top:465px" width="8" height="14"><path d="M0.5 0.5 L7.5 7 L0.5 13.5Z" fill="#1f607f"/></svg><div class="a" style="left:96px;top:472px;width:12px;height:0;border-top:1px dotted #9a9a9a"></div><div class="t" style="left:129px;top:464px;font-size:12.4px;line-height:17px;height:16px">Vyhodnocení účasti na marketingových akcích</div><div class="a" style="left:101px;top:490px;width:8px;height:0;border-top:1px dotted #9a9a9a"></div><svg class="a"  style="left:93px;top:487px" width="9" height="9" viewBox="0 0 9 9"><rect x=".5" y=".5" width="8" height="8" rx="1" fill="#fff" stroke="#9a9a9a"/><path d="M2.5 4.5 H6.5" stroke="#1f2f9a" stroke-width="1.3"/></svg><svg class="a" style="left:108px;top:483px" width="16" height="13" viewBox="0 0 16 13"><path d="M0.5 1.5 H6 L7 3 H0.5Z" fill="#a9d3e8" stroke="#5f9fc0" stroke-width=".6"/><rect x="0.5" y="2.8" width="15" height="9.7" fill="url(#fg)" stroke="#4f94b8" stroke-width=".7"/></svg><div class="t" style="left:129px;top:482px;font-size:12.4px;line-height:17px;height:16px">Vyhodnocení</div><svg class="a" style="left:132px;top:501px" width="8" height="14"><path d="M0.5 0.5 L7.5 7 L0.5 13.5Z" fill="#1f607f"/></svg><div class="a" style="left:115px;top:508px;width:12px;height:0;border-top:1px dotted #9a9a9a"></div><div class="t" style="left:148px;top:500px;font-size:12.4px;line-height:17px;height:16px">Vyhodnocení obchodníků</div><svg class="a" style="left:132px;top:519px" width="8" height="14"><path d="M0.5 0.5 L7.5 7 L0.5 13.5Z" fill="#1f607f"/></svg><div class="a" style="left:115px;top:526px;width:12px;height:0;border-top:1px dotted #9a9a9a"></div><div class="t" style="left:148px;top:518px;font-size:12.4px;line-height:17px;height:16px">Přehled obchodních případů</div><svg class="a" style="left:132px;top:537px" width="8" height="14"><path d="M0.5 0.5 L7.5 7 L0.5 13.5Z" fill="#1f607f"/></svg><div class="a" style="left:115px;top:544px;width:12px;height:0;border-top:1px dotted #9a9a9a"></div><div class="t" style="left:148px;top:536px;font-size:12.4px;line-height:17px;height:16px">Žebříček odběratelů</div><div class="a" style="left:82px;top:562px;width:8px;height:0;border-top:1px dotted #9a9a9a"></div><svg class="a"  style="left:74px;top:559px" width="9" height="9" viewBox="0 0 9 9"><rect x=".5" y=".5" width="8" height="8" rx="1" fill="#fff" stroke="#9a9a9a"/><path d="M2.5 4.5 H6.5" stroke="#1f2f9a" stroke-width="1.3"/><path d="M4.5 2.5 V6.5" stroke="#1f2f9a" stroke-width="1.3"/></svg><svg class="a" style="left:89px;top:555px" width="16" height="13" viewBox="0 0 16 13"><path d="M0.5 1.5 H6 L7 3 H0.5Z" fill="#a9d3e8" stroke="#5f9fc0" stroke-width=".6"/><rect x="0.5" y="2.8" width="15" height="9.7" fill="url(#fg)" stroke="#4f94b8" stroke-width=".7"/></svg><div class="t" style="left:110px;top:554px;font-size:12.4px;line-height:17px;height:16px">Komunikace s partnery</div><div class="a" style="left:82px;top:580px;width:8px;height:0;border-top:1px dotted #9a9a9a"></div><svg class="a"  style="left:74px;top:577px" width="9" height="9" viewBox="0 0 9 9"><rect x=".5" y=".5" width="8" height="8" rx="1" fill="#fff" stroke="#9a9a9a"/><path d="M2.5 4.5 H6.5" stroke="#1f2f9a" stroke-width="1.3"/><path d="M4.5 2.5 V6.5" stroke="#1f2f9a" stroke-width="1.3"/></svg><svg class="a" style="left:89px;top:573px" width="16" height="13" viewBox="0 0 16 13"><path d="M0.5 1.5 H6 L7 3 H0.5Z" fill="#a9d3e8" stroke="#5f9fc0" stroke-width=".6"/><rect x="0.5" y="2.8" width="15" height="9.7" fill="url(#fg)" stroke="#4f94b8" stroke-width=".7"/></svg><div class="t" style="left:110px;top:572px;font-size:12.4px;line-height:17px;height:16px">Publikační systém</div><div class="a" style="left:82px;top:598px;width:8px;height:0;border-top:1px dotted #9a9a9a"></div><svg class="a"  style="left:74px;top:595px" width="9" height="9" viewBox="0 0 9 9"><rect x=".5" y=".5" width="8" height="8" rx="1" fill="#fff" stroke="#9a9a9a"/><path d="M2.5 4.5 H6.5" stroke="#1f2f9a" stroke-width="1.3"/><path d="M4.5 2.5 V6.5" stroke="#1f2f9a" stroke-width="1.3"/></svg><svg class="a" style="left:89px;top:591px" width="16" height="13" viewBox="0 0 16 13"><path d="M0.5 1.5 H6 L7 3 H0.5Z" fill="#a9d3e8" stroke="#5f9fc0" stroke-width=".6"/><rect x="0.5" y="2.8" width="15" height="9.7" fill="url(#fg)" stroke="#4f94b8" stroke-width=".7"/></svg><div class="t" style="left:110px;top:590px;font-size:12.4px;line-height:17px;height:16px">Finance</div><div class="a" style="left:82px;top:616px;width:8px;height:0;border-top:1px dotted #9a9a9a"></div><svg class="a"  style="left:74px;top:613px" width="9" height="9" viewBox="0 0 9 9"><rect x=".5" y=".5" width="8" height="8" rx="1" fill="#fff" stroke="#9a9a9a"/><path d="M2.5 4.5 H6.5" stroke="#1f2f9a" stroke-width="1.3"/><path d="M4.5 2.5 V6.5" stroke="#1f2f9a" stroke-width="1.3"/></svg><svg class="a" style="left:89px;top:609px" width="16" height="13" viewBox="0 0 16 13"><path d="M0.5 1.5 H6 L7 3 H0.5Z" fill="#a9d3e8" stroke="#5f9fc0" stroke-width=".6"/><rect x="0.5" y="2.8" width="15" height="9.7" fill="url(#fg)" stroke="#4f94b8" stroke-width=".7"/></svg><div class="t" style="left:110px;top:608px;font-size:12.4px;line-height:17px;height:16px">Podvojné účetnictví</div><div class="a" style="left:82px;top:634px;width:8px;height:0;border-top:1px dotted #9a9a9a"></div><svg class="a"  style="left:74px;top:631px" width="9" height="9" viewBox="0 0 9 9"><rect x=".5" y=".5" width="8" height="8" rx="1" fill="#fff" stroke="#9a9a9a"/><path d="M2.5 4.5 H6.5" stroke="#1f2f9a" stroke-width="1.3"/><path d="M4.5 2.5 V6.5" stroke="#1f2f9a" stroke-width="1.3"/></svg><svg class="a" style="left:89px;top:627px" width="16" height="13" viewBox="0 0 16 13"><path d="M0.5 1.5 H6 L7 3 H0.5Z" fill="#a9d3e8" stroke="#5f9fc0" stroke-width=".6"/><rect x="0.5" y="2.8" width="15" height="9.7" fill="url(#fg)" stroke="#4f94b8" stroke-width=".7"/></svg><div class="t" style="left:110px;top:626px;font-size:12.4px;line-height:17px;height:16px">Sklady</div><div class="a" style="left:82px;top:652px;width:8px;height:0;border-top:1px dotted #9a9a9a"></div><svg class="a"  style="left:74px;top:649px" width="9" height="9" viewBox="0 0 9 9"><rect x=".5" y=".5" width="8" height="8" rx="1" fill="#fff" stroke="#9a9a9a"/><path d="M2.5 4.5 H6.5" stroke="#1f2f9a" stroke-width="1.3"/><path d="M4.5 2.5 V6.5" stroke="#1f2f9a" stroke-width="1.3"/></svg><svg class="a" style="left:89px;top:645px" width="16" height="13" viewBox="0 0 16 13"><path d="M0.5 1.5 H6 L7 3 H0.5Z" fill="#a9d3e8" stroke="#5f9fc0" stroke-width=".6"/><rect x="0.5" y="2.8" width="15" height="9.7" fill="url(#fg)" stroke="#4f94b8" stroke-width=".7"/></svg><div class="t" style="left:110px;top:644px;font-size:12.4px;line-height:17px;height:16px">Doprava</div><div class="a" style="left:82px;top:670px;width:8px;height:0;border-top:1px dotted #9a9a9a"></div><svg class="a"  style="left:74px;top:667px" width="9" height="9" viewBox="0 0 9 9"><rect x=".5" y=".5" width="8" height="8" rx="1" fill="#fff" stroke="#9a9a9a"/><path d="M2.5 4.5 H6.5" stroke="#1f2f9a" stroke-width="1.3"/><path d="M4.5 2.5 V6.5" stroke="#1f2f9a" stroke-width="1.3"/></svg><svg class="a" style="left:89px;top:663px" width="16" height="13" viewBox="0 0 16 13"><path d="M0.5 1.5 H6 L7 3 H0.5Z" fill="#a9d3e8" stroke="#5f9fc0" stroke-width=".6"/><rect x="0.5" y="2.8" width="15" height="9.7" fill="url(#fg)" stroke="#4f94b8" stroke-width=".7"/></svg><div class="t" style="left:110px;top:662px;font-size:12.4px;line-height:17px;height:16px">Personalistika</div><div class="a" style="left:82px;top:688px;width:8px;height:0;border-top:1px dotted #9a9a9a"></div><svg class="a"  style="left:74px;top:685px" width="9" height="9" viewBox="0 0 9 9"><rect x=".5" y=".5" width="8" height="8" rx="1" fill="#fff" stroke="#9a9a9a"/><path d="M2.5 4.5 H6.5" stroke="#1f2f9a" stroke-width="1.3"/><path d="M4.5 2.5 V6.5" stroke="#1f2f9a" stroke-width="1.3"/></svg><svg class="a" style="left:89px;top:681px" width="16" height="13" viewBox="0 0 16 13"><path d="M0.5 1.5 H6 L7 3 H0.5Z" fill="#a9d3e8" stroke="#5f9fc0" stroke-width=".6"/><rect x="0.5" y="2.8" width="15" height="9.7" fill="url(#fg)" stroke="#4f94b8" stroke-width=".7"/></svg><div class="t" style="left:110px;top:680px;font-size:12.4px;line-height:17px;height:16px">Mzdy</div><div class="a" style="left:82px;top:706px;width:8px;height:0;border-top:1px dotted #9a9a9a"></div><svg class="a"  style="left:74px;top:703px" width="9" height="9" viewBox="0 0 9 9"><rect x=".5" y=".5" width="8" height="8" rx="1" fill="#fff" stroke="#9a9a9a"/><path d="M2.5 4.5 H6.5" stroke="#1f2f9a" stroke-width="1.3"/><path d="M4.5 2.5 V6.5" stroke="#1f2f9a" stroke-width="1.3"/></svg><svg class="a" style="left:89px;top:699px" width="16" height="13" viewBox="0 0 16 13"><path d="M0.5 1.5 H6 L7 3 H0.5Z" fill="#a9d3e8" stroke="#5f9fc0" stroke-width=".6"/><rect x="0.5" y="2.8" width="15" height="9.7" fill="url(#fg)" stroke="#4f94b8" stroke-width=".7"/></svg><div class="t" style="left:110px;top:698px;font-size:12.4px;line-height:17px;height:16px">Majetek</div><div class="a" style="left:82px;top:724px;width:8px;height:0;border-top:1px dotted #9a9a9a"></div><svg class="a"  style="left:74px;top:721px" width="9" height="9" viewBox="0 0 9 9"><rect x=".5" y=".5" width="8" height="8" rx="1" fill="#fff" stroke="#9a9a9a"/><path d="M2.5 4.5 H6.5" stroke="#1f2f9a" stroke-width="1.3"/><path d="M4.5 2.5 V6.5" stroke="#1f2f9a" stroke-width="1.3"/></svg><svg class="a" style="left:89px;top:717px" width="16" height="13" viewBox="0 0 16 13"><path d="M0.5 1.5 H6 L7 3 H0.5Z" fill="#a9d3e8" stroke="#5f9fc0" stroke-width=".6"/><rect x="0.5" y="2.8" width="15" height="9.7" fill="url(#fg)" stroke="#4f94b8" stroke-width=".7"/></svg><div class="t" style="left:110px;top:716px;font-size:12.4px;line-height:17px;height:16px">Procesy, workflow</div><div class="a" style="left:82px;top:742px;width:8px;height:0;border-top:1px dotted #9a9a9a"></div><svg class="a"  style="left:74px;top:739px" width="9" height="9" viewBox="0 0 9 9"><rect x=".5" y=".5" width="8" height="8" rx="1" fill="#fff" stroke="#9a9a9a"/><path d="M2.5 4.5 H6.5" stroke="#1f2f9a" stroke-width="1.3"/><path d="M4.5 2.5 V6.5" stroke="#1f2f9a" stroke-width="1.3"/></svg><svg class="a" style="left:89px;top:735px" width="16" height="13" viewBox="0 0 16 13"><path d="M0.5 1.5 H6 L7 3 H0.5Z" fill="#a9d3e8" stroke="#5f9fc0" stroke-width=".6"/><rect x="0.5" y="2.8" width="15" height="9.7" fill="url(#fg)" stroke="#4f94b8" stroke-width=".7"/></svg><div class="t" style="left:110px;top:734px;font-size:12.4px;line-height:17px;height:16px">Projekty</div><div class="a" style="left:82px;top:760px;width:8px;height:0;border-top:1px dotted #9a9a9a"></div><svg class="a"  style="left:74px;top:757px" width="9" height="9" viewBox="0 0 9 9"><rect x=".5" y=".5" width="8" height="8" rx="1" fill="#fff" stroke="#9a9a9a"/><path d="M2.5 4.5 H6.5" stroke="#1f2f9a" stroke-width="1.3"/><path d="M4.5 2.5 V6.5" stroke="#1f2f9a" stroke-width="1.3"/></svg><svg class="a" style="left:89px;top:753px" width="16" height="13" viewBox="0 0 16 13"><path d="M0.5 1.5 H6 L7 3 H0.5Z" fill="#a9d3e8" stroke="#5f9fc0" stroke-width=".6"/><rect x="0.5" y="2.8" width="15" height="9.7" fill="url(#fg)" stroke="#4f94b8" stroke-width=".7"/></svg><div class="t" style="left:110px;top:752px;font-size:12.4px;line-height:17px;height:16px">Plánování</div><div class="a" style="left:82px;top:778px;width:8px;height:0;border-top:1px dotted #9a9a9a"></div><svg class="a"  style="left:74px;top:775px" width="9" height="9" viewBox="0 0 9 9"><rect x=".5" y=".5" width="8" height="8" rx="1" fill="#fff" stroke="#9a9a9a"/><path d="M2.5 4.5 H6.5" stroke="#1f2f9a" stroke-width="1.3"/><path d="M4.5 2.5 V6.5" stroke="#1f2f9a" stroke-width="1.3"/></svg><svg class="a" style="left:89px;top:771px" width="16" height="13" viewBox="0 0 16 13"><path d="M0.5 1.5 H6 L7 3 H0.5Z" fill="#a9d3e8" stroke="#5f9fc0" stroke-width=".6"/><rect x="0.5" y="2.8" width="15" height="9.7" fill="url(#fg)" stroke="#4f94b8" stroke-width=".7"/></svg><div class="t" style="left:110px;top:770px;font-size:12.4px;line-height:17px;height:16px">Servis</div><div class="a" style="left:82px;top:796px;width:8px;height:0;border-top:1px dotted #9a9a9a"></div><svg class="a"  style="left:74px;top:793px" width="9" height="9" viewBox="0 0 9 9"><rect x=".5" y=".5" width="8" height="8" rx="1" fill="#fff" stroke="#9a9a9a"/><path d="M2.5 4.5 H6.5" stroke="#1f2f9a" stroke-width="1.3"/><path d="M4.5 2.5 V6.5" stroke="#1f2f9a" stroke-width="1.3"/></svg><svg class="a" style="left:89px;top:789px" width="16" height="13" viewBox="0 0 16 13"><path d="M0.5 1.5 H6 L7 3 H0.5Z" fill="#a9d3e8" stroke="#5f9fc0" stroke-width=".6"/><rect x="0.5" y="2.8" width="15" height="9.7" fill="url(#fg)" stroke="#4f94b8" stroke-width=".7"/></svg><div class="t" style="left:110px;top:788px;font-size:12.4px;line-height:17px;height:16px">Výroba</div><div class="a" style="left:82px;top:814px;width:8px;height:0;border-top:1px dotted #9a9a9a"></div><svg class="a"  style="left:74px;top:811px" width="9" height="9" viewBox="0 0 9 9"><rect x=".5" y=".5" width="8" height="8" rx="1" fill="#fff" stroke="#9a9a9a"/><path d="M2.5 4.5 H6.5" stroke="#1f2f9a" stroke-width="1.3"/><path d="M4.5 2.5 V6.5" stroke="#1f2f9a" stroke-width="1.3"/></svg><svg class="a" style="left:89px;top:807px" width="16" height="13" viewBox="0 0 16 13"><path d="M0.5 1.5 H6 L7 3 H0.5Z" fill="#a9d3e8" stroke="#5f9fc0" stroke-width=".6"/><rect x="0.5" y="2.8" width="15" height="9.7" fill="url(#fg)" stroke="#4f94b8" stroke-width=".7"/></svg><div class="t" style="left:110px;top:806px;font-size:12.4px;line-height:17px;height:16px">Nářadí</div><div class="a" style="left:82px;top:832px;width:8px;height:0;border-top:1px dotted #9a9a9a"></div><svg class="a"  style="left:74px;top:829px" width="9" height="9" viewBox="0 0 9 9"><rect x=".5" y=".5" width="8" height="8" rx="1" fill="#fff" stroke="#9a9a9a"/><path d="M2.5 4.5 H6.5" stroke="#1f2f9a" stroke-width="1.3"/><path d="M4.5 2.5 V6.5" stroke="#1f2f9a" stroke-width="1.3"/></svg><svg class="a" style="left:89px;top:825px" width="16" height="13" viewBox="0 0 16 13"><path d="M0.5 1.5 H6 L7 3 H0.5Z" fill="#a9d3e8" stroke="#5f9fc0" stroke-width=".6"/><rect x="0.5" y="2.8" width="15" height="9.7" fill="url(#fg)" stroke="#4f94b8" stroke-width=".7"/></svg><div class="t" style="left:110px;top:824px;font-size:12.4px;line-height:17px;height:16px">Kompletace</div><div class="a" style="left:82px;top:850px;width:8px;height:0;border-top:1px dotted #9a9a9a"></div><svg class="a"  style="left:74px;top:847px" width="9" height="9" viewBox="0 0 9 9"><rect x=".5" y=".5" width="8" height="8" rx="1" fill="#fff" stroke="#9a9a9a"/><path d="M2.5 4.5 H6.5" stroke="#1f2f9a" stroke-width="1.3"/><path d="M4.5 2.5 V6.5" stroke="#1f2f9a" stroke-width="1.3"/></svg><svg class="a" style="left:89px;top:843px" width="16" height="13" viewBox="0 0 16 13"><path d="M0.5 1.5 H6 L7 3 H0.5Z" fill="#a9d3e8" stroke="#5f9fc0" stroke-width=".6"/><rect x="0.5" y="2.8" width="15" height="9.7" fill="url(#fg)" stroke="#4f94b8" stroke-width=".7"/></svg><div class="t" style="left:110px;top:842px;font-size:12.4px;line-height:17px;height:16px">Evidence instalací softwaru</div><div class="a" style="left:82px;top:868px;width:8px;height:0;border-top:1px dotted #9a9a9a"></div><svg class="a"  style="left:74px;top:865px" width="9" height="9" viewBox="0 0 9 9"><rect x=".5" y=".5" width="8" height="8" rx="1" fill="#fff" stroke="#9a9a9a"/><path d="M2.5 4.5 H6.5" stroke="#1f2f9a" stroke-width="1.3"/><path d="M4.5 2.5 V6.5" stroke="#1f2f9a" stroke-width="1.3"/></svg><svg class="a" style="left:89px;top:861px" width="16" height="13" viewBox="0 0 16 13"><path d="M0.5 1.5 H6 L7 3 H0.5Z" fill="#a9d3e8" stroke="#5f9fc0" stroke-width=".6"/><rect x="0.5" y="2.8" width="15" height="9.7" fill="url(#fg)" stroke="#4f94b8" stroke-width=".7"/></svg><div class="t" style="left:110px;top:860px;font-size:12.4px;line-height:17px;height:16px">Knowledge management</div><div class="a" style="left:82px;top:886px;width:8px;height:0;border-top:1px dotted #9a9a9a"></div><svg class="a"  style="left:74px;top:883px" width="9" height="9" viewBox="0 0 9 9"><rect x=".5" y=".5" width="8" height="8" rx="1" fill="#fff" stroke="#9a9a9a"/><path d="M2.5 4.5 H6.5" stroke="#1f2f9a" stroke-width="1.3"/><path d="M4.5 2.5 V6.5" stroke="#1f2f9a" stroke-width="1.3"/></svg><svg class="a" style="left:89px;top:879px" width="16" height="13" viewBox="0 0 16 13"><path d="M0.5 1.5 H6 L7 3 H0.5Z" fill="#a9d3e8" stroke="#5f9fc0" stroke-width=".6"/><rect x="0.5" y="2.8" width="15" height="9.7" fill="url(#fg)" stroke="#4f94b8" stroke-width=".7"/></svg><div class="t" style="left:110px;top:878px;font-size:12.4px;line-height:17px;height:16px">Správa dokumentů (DMS)</div><div class="a" style="left:82px;top:904px;width:8px;height:0;border-top:1px dotted #9a9a9a"></div><svg class="a"  style="left:74px;top:901px" width="9" height="9" viewBox="0 0 9 9"><rect x=".5" y=".5" width="8" height="8" rx="1" fill="#fff" stroke="#9a9a9a"/><path d="M2.5 4.5 H6.5" stroke="#1f2f9a" stroke-width="1.3"/><path d="M4.5 2.5 V6.5" stroke="#1f2f9a" stroke-width="1.3"/></svg><svg class="a" style="left:89px;top:897px" width="16" height="13" viewBox="0 0 16 13"><path d="M0.5 1.5 H6 L7 3 H0.5Z" fill="#a9d3e8" stroke="#5f9fc0" stroke-width=".6"/><rect x="0.5" y="2.8" width="15" height="9.7" fill="url(#fg)" stroke="#4f94b8" stroke-width=".7"/></svg><div class="t" style="left:110px;top:896px;font-size:12.4px;line-height:17px;height:16px">Souhrnné pohledy</div><div class="a" style="left:82px;top:922px;width:8px;height:0;border-top:1px dotted #9a9a9a"></div><svg class="a"  style="left:74px;top:919px" width="9" height="9" viewBox="0 0 9 9"><rect x=".5" y=".5" width="8" height="8" rx="1" fill="#fff" stroke="#9a9a9a"/><path d="M2.5 4.5 H6.5" stroke="#1f2f9a" stroke-width="1.3"/><path d="M4.5 2.5 V6.5" stroke="#1f2f9a" stroke-width="1.3"/></svg><svg class="a" style="left:89px;top:915px" width="16" height="13" viewBox="0 0 16 13"><path d="M0.5 1.5 H6 L7 3 H0.5Z" fill="#a9d3e8" stroke="#5f9fc0" stroke-width=".6"/><rect x="0.5" y="2.8" width="15" height="9.7" fill="url(#fg)" stroke="#4f94b8" stroke-width=".7"/></svg><div class="t" style="left:110px;top:914px;font-size:12.4px;line-height:17px;height:16px">Manažerské přehledy (BI)</div><div class="a" style="left:82px;top:940px;width:8px;height:0;border-top:1px dotted #9a9a9a"></div><svg class="a"  style="left:74px;top:937px" width="9" height="9" viewBox="0 0 9 9"><rect x=".5" y=".5" width="8" height="8" rx="1" fill="#fff" stroke="#9a9a9a"/><path d="M2.5 4.5 H6.5" stroke="#1f2f9a" stroke-width="1.3"/><path d="M4.5 2.5 V6.5" stroke="#1f2f9a" stroke-width="1.3"/></svg><svg class="a" style="left:89px;top:933px" width="16" height="13" viewBox="0 0 16 13"><path d="M0.5 1.5 H6 L7 3 H0.5Z" fill="#a9d3e8" stroke="#5f9fc0" stroke-width=".6"/><rect x="0.5" y="2.8" width="15" height="9.7" fill="url(#fg)" stroke="#4f94b8" stroke-width=".7"/></svg><div class="t" style="left:110px;top:932px;font-size:12.4px;line-height:17px;height:16px">Správa nemovitostí</div><div class="a" style="left:82px;top:958px;width:8px;height:0;border-top:1px dotted #9a9a9a"></div><svg class="a"  style="left:74px;top:955px" width="9" height="9" viewBox="0 0 9 9"><rect x=".5" y=".5" width="8" height="8" rx="1" fill="#fff" stroke="#9a9a9a"/><path d="M2.5 4.5 H6.5" stroke="#1f2f9a" stroke-width="1.3"/><path d="M4.5 2.5 V6.5" stroke="#1f2f9a" stroke-width="1.3"/></svg><svg class="a" style="left:89px;top:951px" width="16" height="13" viewBox="0 0 16 13"><path d="M0.5 1.5 H6 L7 3 H0.5Z" fill="#a9d3e8" stroke="#5f9fc0" stroke-width=".6"/><rect x="0.5" y="2.8" width="15" height="9.7" fill="url(#fg)" stroke="#4f94b8" stroke-width=".7"/></svg><div class="t" style="left:110px;top:950px;font-size:12.4px;line-height:17px;height:16px">Správa nemovitostí (nové)</div><div class="a" style="left:82px;top:976px;width:8px;height:0;border-top:1px dotted #9a9a9a"></div><svg class="a"  style="left:74px;top:973px" width="9" height="9" viewBox="0 0 9 9"><rect x=".5" y=".5" width="8" height="8" rx="1" fill="#fff" stroke="#9a9a9a"/><path d="M2.5 4.5 H6.5" stroke="#1f2f9a" stroke-width="1.3"/><path d="M4.5 2.5 V6.5" stroke="#1f2f9a" stroke-width="1.3"/></svg><svg class="a" style="left:89px;top:969px" width="16" height="13" viewBox="0 0 16 13"><path d="M0.5 1.5 H6 L7 3 H0.5Z" fill="#a9d3e8" stroke="#5f9fc0" stroke-width=".6"/><rect x="0.5" y="2.8" width="15" height="9.7" fill="url(#fg)" stroke="#4f94b8" stroke-width=".7"/></svg><div class="t" style="left:110px;top:968px;font-size:12.4px;line-height:17px;height:16px">Modelování procesů</div></div></div>
<svg class="a" style="left:441px;top:72px" width="1239" height="975" viewBox="0 0 1239 975"><rect x="0" y="0" width="1239" height="975" fill="#004a94"/><rect x="0" y="138.45" width="1239" height="1.5" fill="#eef2f8"/><rect x="0" y="278.20" width="1239" height="1.5" fill="#eef2f8"/><rect x="0" y="417.95" width="1239" height="1.5" fill="#eef2f8"/><rect x="0" y="557.70" width="1239" height="1.5" fill="#eef2f8"/><rect x="0" y="697.45" width="1239" height="1.5" fill="#eef2f8"/><rect x="0" y="837.20" width="1239" height="1.5" fill="#eef2f8"/><rect x="1054.50" y="0" width="1.5" height="975" fill="#eef2f8"/><rect x="914.75" y="0" width="1.5" height="975" fill="#eef2f8"/><rect x="775.00" y="0" width="1.5" height="975" fill="#eef2f8"/><rect x="635.25" y="0" width="1.5" height="975" fill="#eef2f8"/><rect x="495.50" y="0" width="1.5" height="975" fill="#eef2f8"/><rect x="355.75" y="0" width="1.5" height="975" fill="#eef2f8"/><rect x="216.00" y="0" width="1.5" height="975" fill="#eef2f8"/><rect x="76.25" y="0" width="1.5" height="975" fill="#eef2f8"/><rect x="1237.40" y="0" width="1.6" height="975" fill="#eef2f8"/><defs><pattern id="fgp" x="1054.55" y="138.5" width="8.73438" height="8.73438" patternUnits="userSpaceOnUse"><rect x="0" y="0" width="8.73438" height="1.4" fill="#eef3fa"/><rect x="0" y="0" width="1.4" height="8.73438" fill="#eef3fa"/></pattern></defs><rect x="1054.55" y="139.2" width="43.77" height="835.8" fill="url(#fgp)"/><rect x="1054.55" y="0" width="10.13" height="139.2" fill="url(#fgp)"/><rect x="1098.22" y="139.2" width="1.4" height="835.8" fill="#eef3fa"/><path fill-rule="evenodd" fill="#fff" d="M915 69.30000000000001 a70 70 0 1 0 140 0 a70 70 0 1 0 -140 0 Z M948 69.30000000000001 a37 37 0 1 0 74 0 a37 37 0 1 0 -74 0 Z"/><polygon fill="#fff" points="1010,70.4 1054.6,114.80000000000001 1030.5,138.5 986.3,94"/><clipPath id="ic"><circle cx="985" cy="69.30000000000001" r="37"/></clipPath><g clip-path="url(#ic)"><rect x="984.25" y="32.30000000000001" width="1.5" height="74" fill="#e6eef8"/><rect x="948" y="68.55000000000001" width="74" height="1.5" fill="#e6eef8"/><polygon fill="#fff" points="1010,70.4 1054.6,114.80000000000001 1030.5,138.5 986.3,94"/></g><rect x="1063.28" y="0" width="35.82" height="35.09" fill="#fff"/><rect x="1063.28" y="42.42" width="35.82" height="97.48" fill="#fff"/><rect x="1072.02" y="34.39" width="1.4" height="8.73" fill="#fff"/><rect x="1080.75" y="34.39" width="1.4" height="8.73" fill="#fff"/><rect x="1089.49" y="34.39" width="1.4" height="8.73" fill="#fff"/><rect x="1098.22" y="34.39" width="1.4" height="8.73" fill="#fff"/><g font-family="Liberation Sans,sans-serif" font-weight="bold" font-size="22.5" fill="#fff"><text x="1105" y="29" textLength="126" lengthAdjust="spacingAndGlyphs">CENTRÁLNÍ</text><text x="1105" y="52" textLength="83" lengthAdjust="spacingAndGlyphs">MOZEK</text><text x="1105" y="75" textLength="69" lengthAdjust="spacingAndGlyphs">FIRMY</text></g></svg>
<div class="a" style="left:0px;top:1047px;width:1680px;height:3px;background:linear-gradient(90deg,#3a3a3a 0,#222 25%,#111 60%,#0a0a0a 100%)"></div>
<div class="a" style="left:437px;top:72px;width:4px;height:975px;background:#fff"></div>
<svg class="a" style="left:561px;top:939px" width="58" height="62" viewBox="0 0 58 62"><rect x="3" y="15.5" width="52" height="1.8" fill="#b9b9b9"/><rect x="3" y="34.5" width="52" height="1.8" fill="#b9b9b9"/><g transform="rotate(20 11.25 15)"><rect x="9" y="1" width="4.5" height="14" fill="#38d12e" stroke="#8a8a8a" stroke-width=".4"/><circle cx="11.25" cy="12.8" r=".8" fill="#30507a"/></g><g><rect x="17" y="0" width="4.5" height="15.5" fill="#f0f0f0" stroke="#8a8a8a" stroke-width=".4"/><circle cx="19.25" cy="13.3" r=".8" fill="#30507a"/></g><g><rect x="22" y="0" width="4.5" height="15.5" fill="#c9c9c9" stroke="#8a8a8a" stroke-width=".4"/><circle cx="24.25" cy="13.3" r=".8" fill="#30507a"/></g><rect x="35" y="10" width="16" height="5.5" fill="#e6e6e6" stroke="#8a8a8a" stroke-width=".4"/><rect x="37" y="11.5" width="4" height="2" fill="#30507a"/><g><rect x="10" y="19" width="4.5" height="15.5" fill="#d0d0d0" stroke="#8a8a8a" stroke-width=".4"/><circle cx="12.25" cy="32.3" r=".8" fill="#30507a"/></g><g><rect x="15" y="19" width="4.5" height="15.5" fill="#f4f4f4" stroke="#8a8a8a" stroke-width=".4"/><circle cx="17.25" cy="32.3" r=".8" fill="#30507a"/></g><g><rect x="19.5" y="19" width="3" height="15.5" fill="#38d12e" stroke="#8a8a8a" stroke-width=".4"/><circle cx="21.0" cy="32.3" r=".8" fill="#30507a"/></g><rect x="24" y="23" width="15" height="5.5" fill="#ececec" stroke="#8a8a8a" stroke-width=".4"/><rect x="24" y="29" width="15" height="5.5" fill="#dcdcdc" stroke="#8a8a8a" stroke-width=".4"/><rect x="25.5" y="24.5" width="4" height="2" fill="#30507a"/><g><rect x="45" y="19" width="4.5" height="15.5" fill="#38d12e" stroke="#8a8a8a" stroke-width=".4"/><circle cx="47.25" cy="32.3" r=".8" fill="#30507a"/></g><g><rect x="7" y="38" width="4.5" height="15" fill="#e4e4e4" stroke="#8a8a8a" stroke-width=".4"/><circle cx="9.25" cy="50.8" r=".8" fill="#30507a"/></g><g><rect x="12" y="38" width="4.5" height="15" fill="#bdbdbd" stroke="#8a8a8a" stroke-width=".4"/><circle cx="14.25" cy="50.8" r=".8" fill="#30507a"/></g><g><rect x="21" y="38" width="4.5" height="15" fill="#d4d4d4" stroke="#8a8a8a" stroke-width=".4"/><circle cx="23.25" cy="50.8" r=".8" fill="#30507a"/></g><g transform="rotate(22 34.25 53)"><rect x="32" y="38" width="4.5" height="15" fill="#38d12e" stroke="#8a8a8a" stroke-width=".4"/><circle cx="34.25" cy="50.8" r=".8" fill="#30507a"/></g><g><rect x="42" y="38" width="4.5" height="15" fill="#ededed" stroke="#8a8a8a" stroke-width=".4"/><circle cx="44.25" cy="50.8" r=".8" fill="#30507a"/></g><g><rect x="47" y="38" width="4.5" height="15" fill="#cfcfcf" stroke="#8a8a8a" stroke-width=".4"/><circle cx="49.25" cy="50.8" r=".8" fill="#30507a"/></g><g opacity=".25"><rect x="7" y="54" width="4.5" height="6" fill="#ddd"/><rect x="12" y="54" width="4.5" height="6" fill="#bbb"/><rect x="21" y="54" width="4.5" height="6" fill="#ccc"/><rect x="34" y="54" width="5" height="6" fill="#38d12e"/><rect x="42" y="54" width="4.5" height="6" fill="#ddd"/><rect x="47" y="54" width="4.5" height="6" fill="#ccc"/></g></svg>
<div class="t" style="left:545px;top:1010px;color:#fff">Marketingové akce</div>
<svg class="a" style="left:702px;top:943px" width="56" height="62" viewBox="0 0 56 62"><ellipse cx="14" cy="9" rx="12" ry="7" fill="#cfcfcf" stroke="#9a9a9a" stroke-width=".6"/><circle cx="4.5" cy="17" r="2" fill="#bdbdbd"/><circle cx="3" cy="21.5" r="1.3" fill="#bdbdbd"/><path d="M6 9 l2 -2 l2 3 l2 -3 l2 3 l2 -3 l2 3 l2 -3 l2 2" stroke="#666" stroke-width="1.2" fill="none"/><path d="M26 1 H50 Q52 1 52 3 V14 Q52 16 50 16 H36 L31 23 V16 H28 Q26 16 26 14Z" fill="#e01a24" stroke="#f2f2f2" stroke-width=".8"/><path d="M29 5.5 l2 -2 l2.3 3 l2.3 -3 l2.3 3 l2.3 -3 l2.3 3 l2.3 -3 l2 2 M29 11.5 l2 -2 l2.3 3 l2.3 -3 l2.3 3 l2.3 -3 l2.3 3 l2.3 -3 l2 2" stroke="#fff" stroke-width="1.4" fill="none"/><circle cx="12" cy="27" r="6" fill="#7d7d7d"/><circle cx="10.5" cy="25" r="2.3" fill="#c4c4c4" opacity=".8"/><path d="M2 52 V39 Q2 34 7 34 H17 Q22 34 22 39 V52Z" fill="#8c8c8c"/><path d="M8 34 H16 L15 52 H9Z" fill="#e01a24"/><rect x="17.5" y="40" width="3.5" height="10" rx="1.5" fill="#5a5a5a"/><circle cx="43" cy="27" r="6" fill="#8d8d8d"/><circle cx="44.5" cy="25" r="2.3" fill="#d4d4d4" opacity=".8"/><path d="M32 52 V39 Q32 34 37 34 H49 Q54 34 54 39 V52Z" fill="#b5b5b5"/><path d="M37 33.5 Q43 38 49 33.5 L49 35.5 Q43 40 37 35.5Z" fill="#e01a24"/><rect x="49.5" y="40" width="3.5" height="10" rx="1.5" fill="#8a8a8a"/><g opacity=".22"><rect x="2" y="53" width="20" height="7" fill="#c44"/><rect x="32" y="53" width="22" height="7" fill="#bbb"/></g></svg>
<div class="t" style="left:684px;top:1013px;color:#fff">Jednání s partnery</div>
<svg class="a" style="left:832px;top:949px" width="66" height="56" viewBox="0 0 66 56"><rect x="4" y="41" width="57" height="3.2" rx="1.5" fill="#2a2a2a"/><g transform="rotate(27 32 22)"><rect x="6" y="8" width="56" height="27" rx="5" fill="#d2d2d2" stroke="#8f8f8f" stroke-width="1.2"/><rect x="47" y="13" width="8" height="8" fill="#1e8de8" stroke="#0d5fae" stroke-width=".6"/><path d="M13 17 l2.5 -2.5 l2.5 3.5 l2.5 -3.5 l2.5 3.5 l2.5 -3.5 l2.5 3 M13 24 l2.5 -2.5 l2.5 3.5 l2.5 -3.5 l2.5 3.5 l2.5 -3.5 l2.5 3" stroke="#333" stroke-width="1.5" fill="none"/></g><rect x="0" y="44" width="66" height="12" fill="#004a94"/><rect x="4" y="41" width="57" height="3.2" rx="1.5" fill="#2a2a2a"/><g opacity=".18"><path d="M12 46 L52 46 L46 52 L18 52Z" fill="#ccc"/></g></svg>
<div class="t" style="left:845px;top:1010px;color:#fff">Podněty</div>
<div class="win" style="left:443px;top:72px;width:898px;height:760px"><div class="a" style="left:0px;top:0px;width:898px;height:27.5px;background:#ebebeb;border-top:1px solid #d2d2d2"></div><div class="a" style="left:0px;top:27px;width:898px;height:1px;background:#d5e2f7"></div><svg class="a" style="left:7px;top:5px" width="15" height="17" viewBox="0 0 15 17"><path d="M1 0.5 L14.5 8.5 L1 16.5Z" fill="#fdfdfd"/><path d="M3.5 12.5 L10 8.8" stroke="#9a9a9a" stroke-width="1.2"/></svg><div class="t" style="left:26px;top:8px;font-weight:bold;font-size:11px;color:#3a3a3a">Obchodní případy</div><div class="t" style="left:800px;top:8px;font-weight:bold;font-size:10.5px;color:#3a3a3a">34</div><svg class="a" style="left:825px;top:7.5px" width="64" height="14" viewBox="0 0 64 14" fill="none" stroke="#000"><path d="M0 7.5 H11" stroke-width="1.3"/><rect x="25.6" y="2.6" width="9" height="9" stroke-width="1.2"/><path d="M50.5 2.5 L59.5 11.5 M59.5 2.5 L50.5 11.5" stroke-width="2.1"/></svg><div class="a pan" style="left:12px;top:56px;width:734px;height:692px;"></div><div class="a tab" style="left:12px;top:36px;width:52.5px;height:21px;"></div><div class="t" style="left:19px;top:39.5px;color:#1a1a2a">Seznam</div><div class="t" style="left:69px;top:40.5px;color:#1a1a2a">Detail</div><div class="t" style="left:110.5px;top:40.5px;color:#1a1a2a">Obchodní partner</div><div class="t" style="left:206px;top:40.5px;color:#1a1a2a">Druh zakázky</div><div class="a" style="left:25px;top:69px;width:708px;height:640px;border:1px solid #d6e0f5;background:#fff"></div><div class="a hd" style="left:26px;top:70px;width:87px;height:36px;padding-left:3px">Kód obchodního<br>případu</div><div class="a hd" style="left:113px;top:70px;width:206px;height:36px;padding-left:3px">Název obchodního případu</div><div class="a hd" style="left:319px;top:70px;width:92px;height:36px;padding-left:3px">Fáze obchodního<br>případu</div><div class="a hd" style="left:411px;top:70px;width:113px;height:36px;padding-left:3px">Datum zaevidování</div><div class="a hd" style="left:524px;top:70px;width:71px;height:36px;padding-left:3px">Druh<br>kontaktu</div><div class="a hd" style="left:595px;top:70px;width:87px;height:36px;padding-left:3px">Kód obchodního<br>partnera</div><div class="a hd" style="left:682px;top:70px;width:34px;height:36px;padding-left:3px">IČO</div><div class="a" style="left:26px;top:124px;width:689px;height:18px;background:#f8fafe"></div><div class="a" style="left:26px;top:160px;width:689px;height:18px;background:#f8fafe"></div><div class="a" style="left:26px;top:196px;width:689px;height:18px;background:#f8fafe"></div><div class="a" style="left:26px;top:232px;width:689px;height:18px;background:#f8fafe"></div><div class="a" style="left:26px;top:268px;width:689px;height:18px;background:#f8fafe"></div><div class="a" style="left:26px;top:304px;width:689px;height:18px;background:#f8fafe"></div><div class="a" style="left:26px;top:340px;width:689px;height:18px;background:#f8fafe"></div><div class="a" style="left:26px;top:376px;width:689px;height:18px;background:#f8fafe"></div><div class="a" style="left:26px;top:412px;width:689px;height:18px;background:#f8fafe"></div><div class="a" style="left:26px;top:448px;width:689px;height:18px;background:#f8fafe"></div><div class="a" style="left:26px;top:484px;width:689px;height:18px;background:#f8fafe"></div><div class="a" style="left:26px;top:520px;width:689px;height:18px;background:#f8fafe"></div><div class="a" style="left:26px;top:556px;width:689px;height:18px;background:#f8fafe"></div><div class="a" style="left:26px;top:592px;width:689px;height:18px;background:#f8fafe"></div><div class="a" style="left:26px;top:628px;width:689px;height:18px;background:#f8fafe"></div><div class="a" style="left:26px;top:664px;width:689px;height:18px;background:#f8fafe"></div><div class="a cell sel" style="left:26px;top:106px;width:87px;height:18px;">OP-CZ-CKOLO</div><div class="a cell" style="left:26px;top:124px;width:87px;height:18px;">OP-CZ-VELBIKE</div><div class="a cell" style="left:26px;top:142px;width:87px;height:18px;">OP-GE-GESIPA</div><div class="a cell sel" style="left:113px;top:106px;width:206px;height:18px;">OP České kolo - Velko</div><div class="a cell g1" style="left:113px;top:124px;width:206px;height:18px;">OP Velkoobchod Bikezone - Velko</div><div class="a cell g2" style="left:113px;top:142px;width:206px;height:18px;">OP Gesipa Kunstoffe - Velko</div><div class="a cell sel" style="left:319px;top:106px;width:92px;height:18px;">Diagnóza potřeby</div><div class="a cell g1" style="left:319px;top:124px;width:92px;height:18px;">Realizace</div><div class="a cell g2" style="left:319px;top:142px;width:92px;height:18px;">Realizace</div><div class="a cell sel" style="left:411px;top:106px;width:113px;height:18px;">05.12.2007 14:44:58</div><div class="a cell" style="left:411px;top:124px;width:113px;height:18px;">05.12.2007 14:44:58</div><div class="a cell" style="left:411px;top:142px;width:113px;height:18px;">05.12.2007 14:44:58</div><div class="a cell sel" style="left:524px;top:106px;width:71px;height:18px;">Aktivní prodej</div><div class="a cell" style="left:524px;top:124px;width:71px;height:18px;">Výstava</div><div class="a cell" style="left:524px;top:142px;width:71px;height:18px;">Prodejna</div><div class="a cell sel" style="left:595px;top:106px;width:87px;height:18px;">CESKOLSIDLO</div><div class="a cell" style="left:595px;top:124px;width:87px;height:18px;">VELBIKE</div><div class="a cell" style="left:595px;top:142px;width:87px;height:18px;">GESIPA</div><div class="a cell sel" style="left:682px;top:106px;width:34px;height:18px;">98756</div><div class="a cell" style="left:682px;top:124px;width:34px;height:18px;">64634</div><div class="a cell" style="left:682px;top:142px;width:34px;height:18px;">21114</div><div class="a cell" style="left:26px;top:160px;width:86px;height:18px;">OP-SK-DEWAL</div><div class="a cell" style="left:26px;top:178px;width:86px;height:18px;">OP-CZ-VELOM</div><div class="a cell" style="left:26px;top:196px;width:86px;height:18px;">OP-CZ-TESKOL</div><div class="a cell" style="left:26px;top:214px;width:86px;height:18px;">OP-CZ-RFW</div><div class="a cell" style="left:26px;top:232px;width:86px;height:18px;">OP-CZ-EKOTOOL</div><div class="a cell" style="left:26px;top:250px;width:86px;height:18px;">OP-CZ-CYKLOD</div><div class="a cell" style="left:26px;top:268px;width:86px;height:18px;">OP-CZ-BARLAK</div><div class="a cell" style="left:26px;top:286px;width:86px;height:18px;">OP-CZ-PAPYR</div><div class="a cell" style="left:26px;top:304px;width:86px;height:18px;">OP-CZ-PROCYKL</div><div class="a cell" style="left:26px;top:322px;width:86px;height:18px;">OP-JP-TOMEI</div><div class="a cell" style="left:26px;top:340px;width:86px;height:18px;">OP-CZ-TECHIMP</div><div class="a cell" style="left:26px;top:358px;width:86px;height:18px;">OP-CZ-ALKAN</div><div class="a cell" style="left:26px;top:376px;width:86px;height:18px;">OP-CZ-FESKO</div><div class="a cell" style="left:26px;top:394px;width:86px;height:18px;">QWERTZ</div><div class="a cell" style="left:26px;top:412px;width:86px;height:18px;">OP-CZ-CKOLO</div><div class="a cell" style="left:26px;top:430px;width:86px;height:18px;">OP-CZ-VELBIKE</div><div class="a cell" style="left:26px;top:448px;width:86px;height:18px;">OP-GE-GESIPA</div><div class="a cell" style="left:26px;top:466px;width:86px;height:18px;">OP-SK-DEWAL</div><div class="a cell" style="left:26px;top:484px;width:86px;height:18px;">OP-CZ-VELOM</div><div class="a cell" style="left:26px;top:502px;width:86px;height:18px;">OP-CZ-TESKOL</div><div class="a cell" style="left:26px;top:520px;width:86px;height:18px;">OP-CZ-RFW</div><div class="a cell" style="left:26px;top:538px;width:86px;height:18px;">OP-CZ-EKOTOOL</div><div class="a cell" style="left:26px;top:556px;width:86px;height:18px;">OP-CZ-CYKLOD</div><div class="a cell" style="left:26px;top:574px;width:86px;height:18px;">OP-CZ-BARLAK</div><div class="a cell" style="left:26px;top:592px;width:86px;height:18px;">OP-CZ-PAPYR</div><div class="a cell" style="left:26px;top:610px;width:86px;height:18px;">OP-CZ-PROCYKL</div><div class="a cell" style="left:26px;top:628px;width:86px;height:18px;">OP-JP-TOMEI</div><div class="a cell" style="left:26px;top:646px;width:86px;height:18px;">OP-CZ-TECHIMP</div><div class="a cell" style="left:26px;top:664px;width:86px;height:18px;">OP-CZ-ALKAN</div><div class="a" style="left:715px;top:70px;width:17.5px;height:622px;background:#f3f7fb"></div><div class="a" style="left:715px;top:87px;width:17.5px;height:500px;background:#d6e5f3"></div><svg class="a" style="left:718.5px;top:74.5px" width="10" height="7"><path d="M1 6 L5 1.5 L9 6" fill="none" stroke="#0a1a2a" stroke-width="2"/></svg><div class="a" style="left:26px;top:691px;width:706px;height:17px;background:#f3f7fb"></div><div class="a" style="left:43px;top:691px;width:17px;height:17px;background:#d6e5f3"></div><svg class="a" style="left:30px;top:694px" width="8" height="11"><path d="M7 1 L2 5.5 L7 10" fill="none" stroke="#0a1a2a" stroke-width="2.2"/></svg><div class="a" style="left:25px;top:718px;width:13px;height:13px;border:1px solid #7a9aa5;background:#fff"></div><div class="t" style="left:41.5px;top:719px;">Nesledované</div><div class="btn" style="left:758px;top:52px;width:128px">Poznámky</div><div class="btn" style="left:758px;top:80px;width:128px">Přílohy</div><div class="btn" style="left:758px;top:108px;width:128px">Elektronické zprávy</div><div class="btn" style="left:758px;top:136px;width:128px">Souhrn informací</div><div class="btn" style="left:758px;top:164px;width:128px">Další</div><div class="btn" style="left:758px;top:192px;width:128px">Další</div><div class="btn" style="left:758px;top:220px;width:128px">Další</div><div class="btn" style="left:758px;top:248px;width:128px">Další</div><div class="btn" style="left:758px;top:276px;width:128px">Další</div><div class="btn" style="left:758px;top:304px;width:128px">Další</div><div class="btn" style="left:758px;top:332px;width:128px">Další</div><div class="btn" style="left:758px;top:360px;width:128px">Další</div><div class="btn" style="left:758px;top:388px;width:128px">Další</div><div class="btn" style="left:758px;top:416px;width:128px">Další<i></i></div><div class="btn" style="left:758px;top:444px;width:128px">Další<i></i></div><div class="btn" style="left:758px;top:472px;width:128px">Další<i></i></div><div class="btn" style="left:758px;top:500px;width:128px">Další</div><div class="btn" style="left:758px;top:528px;width:128px">Další</div><div class="btn" style="left:758px;top:556px;width:128px">Další<i></i></div><div class="btn" style="left:758px;top:724px;width:128px">Další</div></div>
<div class="win" style="left:550px;top:221px;width:939px;height:267px"><div class="a" style="left:0px;top:0px;width:939px;height:27.5px;background:#ebebeb"></div><div class="a" style="left:0px;top:27px;width:939px;height:1px;background:#d5e2f7"></div><svg class="a" style="left:6.5px;top:5px" width="15" height="17" viewBox="0 0 15 17"><path d="M1 0.5 L14.5 8.5 L1 16.5Z" fill="#fdfdfd"/><path d="M3.5 12.5 L10 8.8" stroke="#9a9a9a" stroke-width="1.2"/></svg><div class="t" style="left:26px;top:8px;font-weight:bold;font-size:11px;color:#3a3a3a">Kontakty akce</div><div class="t" style="left:848px;top:8px;font-weight:bold;font-size:10.5px;color:#3a3a3a">1</div><svg class="a" style="left:866px;top:7.5px" width="64" height="14" viewBox="0 0 64 14" fill="none" stroke="#000"><path d="M0 7.5 H11" stroke-width="1.3"/><rect x="25.6" y="2.6" width="9" height="9" stroke-width="1.2"/><path d="M50.5 2.5 L59.5 11.5 M59.5 2.5 L50.5 11.5" stroke-width="2.1"/></svg><div class="a pan" style="left:12px;top:56px;width:779px;height:200px;"></div><div class="a tab" style="left:12px;top:36px;width:93px;height:21px;"></div><div class="t" style="left:19px;top:39.5px;color:#1a1a2a">Kontaktní osoby</div><div class="t" style="left:108px;top:40.5px;color:#1a1a2a">Kontaktní partneři</div><div class="a" style="left:25px;top:69px;width:753.5px;height:174px;border:1px solid #d6e0f5;background:#fff"></div><div class="a hd" style="left:26px;top:70px;width:52px;height:36px;">Titul před<br>jménem</div><div class="a cell sel" style="left:26px;top:106px;width:52px;height:18px;"></div><div class="a hd" style="left:78px;top:70px;width:67px;height:36px;">Příjmení</div><div class="a cell sel" style="left:78px;top:106px;width:67px;height:18px;">Havlová</div><div class="a hd" style="left:145px;top:70px;width:73px;height:36px;">Jméno</div><div class="a cell sel" style="left:145px;top:106px;width:73px;height:18px;">Kateřina</div><div class="a hd" style="left:218px;top:70px;width:44px;height:36px;">Titul za<br>jménem</div><div class="a cell sel" style="left:218px;top:106px;width:44px;height:18px;">DiS.</div><div class="a hd" style="left:262px;top:70px;width:39.5px;height:36px;">Pohlaví</div><div class="a cell sel" style="left:262px;top:106px;width:39.5px;height:18px;">Žena</div><div class="a hd" style="left:301.5px;top:70px;width:93.5px;height:36px;">Celé jméno</div><div class="a cell sel" style="left:301.5px;top:106px;width:93.5px;height:18px;">Havlová Kateřina</div><div class="a hd" style="left:395px;top:70px;width:94px;height:36px;">Role osoby u akce</div><div class="a cell sel" style="left:395px;top:106px;width:94px;height:18px;">Asistentka</div><div class="a hd" style="left:489px;top:70px;width:185px;height:36px;">E-mail</div><div class="a cell sel" style="left:489px;top:106px;width:185px;height:18px;">katerina.havlova@seznam.cz</div><div class="a hd" style="left:674px;top:70px;width:104px;height:36px;">Telefon</div><div class="a cell sel" style="left:674px;top:106px;width:104px;height:18px;">+420737703442</div><div class="btn" style="left:799px;top:56px;width:128px">Karta osoby</div><div class="btn" style="left:799px;top:84px;width:128px">Obchodní partner</div><div class="btn" style="left:799px;top:112px;width:128px">Vytvořit e-mail</div><div class="btn" style="left:799px;top:140px;width:128px">Nová osoba</div><div class="btn dis" style="left:799px;top:178px;width:128px">Vybrat hl. kontakt</div><div class="btn" style="left:799px;top:206px;width:128px">Multivýběr<i></i></div><div class="btn" style="left:799px;top:234px;width:128px">Tisk</div><div class="a" style="left:0px;top:0px;width:1px;height:267px;background:#b9b9b9"></div><div class="a" style="left:0px;top:0px;width:939px;height:1px;background:#cfcfcf"></div></div>
<div class="win" style="left:533px;top:354px;width:788px;height:564px"><div class="a" style="left:0px;top:0px;width:788px;height:27.5px;background:#1c4869"></div><svg class="a" style="left:8px;top:5.5px" width="15" height="17" viewBox="0 0 15 17"><path d="M1 0.5 L14.5 8.5 L1 16.5Z" fill="#ffffff"/><path d="M3.5 12.5 L10 8.8" stroke="#b5b5b5" stroke-width="1.2"/></svg><div class="t" style="left:26px;top:8px;font-weight:bold;font-size:11px;color:#fff">Karta osoby</div><div class="t" style="left:697px;top:8px;font-weight:bold;font-size:10.5px;color:#fff">1</div><svg class="a" style="left:715px;top:7.5px" width="64" height="14" viewBox="0 0 64 14" fill="none" stroke="#fff"><path d="M0 7.5 H11" stroke-width="1.3"/><rect x="25.6" y="2.6" width="9" height="9" stroke-width="1.2"/><path d="M50.5 2.5 L59.5 11.5 M59.5 2.5 L50.5 11.5" stroke-width="1.3"/></svg><div class="t" style="left:12px;top:38.5px;font-weight:bold;font-size:12.6px;color:#0c1a2a">Havlová Kateřina DiS.</div><div class="a pan" style="left:12px;top:84px;width:628px;height:468px;"></div><div class="a tab" style="left:12px;top:64px;width:85px;height:21px;"></div><div class="t" style="left:19px;top:67.5px;color:#1a1a2a">Základní údaje</div><div class="t" style="left:101px;top:68.5px;color:#1a1a2a">Ostatní údaje</div><div class="t" style="left:24px;top:97px;">Základní údaje</div><div class="a gb" style="left:24px;top:112.5px;width:233px;height:159px;"></div><div class="t" style="left:32px;top:129px;">Příjmení</div><div class="dots" style="left:77px;top:128px;width:77px">........................................</div><div class="a" style="left:163px;top:121px;width:85px;height:19px;border:1px solid #e0202c;background:#dfffbf;box-shadow:inset 0 0 0 1px rgba(224,32,44,.45)"></div><div class="a" style="left:165px;top:123px;width:40px;height:15px;background:#336a9a"></div><div class="t" style="left:165.5px;top:123.5px;color:#fff">Havlová</div><div class="t" style="left:32px;top:153px;">Jméno</div><div class="dots" style="left:68px;top:152px;width:86px">........................................</div><div class="a inp" style="left:163px;top:145px;width:85px;height:19px;">Kateřina</div><div class="t" style="left:32px;top:177px;">Titul před jménem</div><div class="dots" style="left:123px;top:176px;width:31px">........................................</div><div class="a inp" style="left:163px;top:169px;width:85px;height:19px;"></div><div class="a" style="left:229px;top:170px;width:18px;height:17px;background:#f4f7fd"></div><div class="t" style="left:231px;top:173px;font-size:11px;letter-spacing:0"><b>···</b></div><div class="t" style="left:32px;top:201px;">Titul za jménem</div><div class="dots" style="left:111px;top:200px;width:43px">........................................</div><div class="a inp" style="left:163px;top:193px;width:85px;height:19px;">DiS.</div><div class="a" style="left:229px;top:194px;width:18px;height:17px;background:#f4f7fd"></div><div class="t" style="left:231px;top:197px;font-size:11px;letter-spacing:0"><b>···</b></div><div class="t" style="left:32px;top:225px;">Pohlaví</div><div class="dots" style="left:73px;top:224px;width:81px">........................................</div><div class="a inp" style="left:163px;top:217px;width:85px;height:19px;">Žena</div><svg class="a" style="left:233px;top:223px" width="10" height="8"><path d="M1 1.5 L5 6 L9 1.5" fill="none" stroke="#000" stroke-width="2"/></svg><div class="t" style="left:32px;top:249px;">Datum narození</div><div class="dots" style="left:112px;top:248px;width:42px">........................................</div><div class="a inp" style="left:163px;top:241px;width:85px;height:19px;">31.01.1978</div><svg class="a" style="left:233px;top:247px" width="10" height="8"><path d="M1 1.5 L5 6 L9 1.5" fill="none" stroke="#000" stroke-width="2"/></svg><div class="t" style="left:265px;top:97px;">Trvalé bydliště</div><div class="a gb" style="left:265px;top:112.5px;width:225px;height:159px;"></div><div class="t" style="left:272.5px;top:129px;">Ulice</div><div class="dots" style="left:299.5px;top:128px;width:96.5px">........................................</div><div class="a inp" style="left:404px;top:121px;width:77px;height:19px;">U nádraží 13</div><div class="t" style="left:272.5px;top:153px;">Obec</div><div class="dots" style="left:301.5px;top:152px;width:94.5px">........................................</div><div class="a inp" style="left:404px;top:145px;width:77px;height:19px;">Rapotice</div><div class="a" style="left:462px;top:146px;width:18px;height:17px;background:#f4f7fd"></div><div class="t" style="left:464px;top:149px;font-size:11px"><b>···</b></div><div class="t" style="left:272.5px;top:177px;">PSČ</div><div class="dots" style="left:296.5px;top:176px;width:99.5px">........................................</div><div class="a inp" style="left:404px;top:169px;width:77px;height:19px;">67573</div><div class="a" style="left:462px;top:170px;width:18px;height:17px;background:#f4f7fd"></div><div class="t" style="left:464px;top:173px;font-size:11px"><b>···</b></div><div class="t" style="left:272.5px;top:201px;">Okres</div><div class="dots" style="left:305.5px;top:200px;width:90.5px">........................................</div><div class="a inp" style="left:404px;top:193px;width:77px;height:19px;">Třebíč</div><div class="a" style="left:462px;top:194px;width:18px;height:17px;background:#f4f7fd"></div><div class="t" style="left:464px;top:197px;font-size:11px"><b>···</b></div><div class="t" style="left:272.5px;top:225px;">Stát</div><div class="dots" style="left:298.5px;top:224px;width:97.5px">........................................</div><div class="a inp" style="left:404px;top:217px;width:77px;height:19px;"></div><div class="a" style="left:462px;top:218px;width:18px;height:17px;background:#f4f7fd"></div><div class="t" style="left:464px;top:221px;font-size:11px"><b>···</b></div><div class="t" style="left:272.5px;top:249px;">Kód státu</div><div class="dots" style="left:324.5px;top:248px;width:71.5px">........................................</div><div class="a" style="left:404px;top:241px;width:77px;height:19px;background:#dfe9fd;border:1px solid #d3e0f8"></div><div class="t" style="left:499px;top:97px;">Fotografie osoby</div><div class="a" style="left:501px;top:114px;width:126px;height:132px;border:1px solid #cfdcfa;background:#fff"></div><svg class="a" style="left:501.5px;top:114.5px" width="125" height="131" viewBox="0 0 125 131">
<defs>
<filter id="b1" x="-10%" y="-10%" width="120%" height="120%"><feGaussianBlur stdDeviation="1.1"/></filter>
<filter id="b2" x="-20%" y="-20%" width="140%" height="140%"><feGaussianBlur stdDeviation="2.2"/></filter>
<linearGradient id="hairg" x1="0" y1="0" x2="1" y2="1"><stop offset="0" stop-color="#f6f0e0"/><stop offset=".5" stop-color="#efe6d0"/><stop offset="1" stop-color="#e0d2b0"/></linearGradient>
<radialGradient id="sking" cx=".42" cy=".45" r=".65"><stop offset="0" stop-color="#f3c9aa"/><stop offset=".6" stop-color="#e6ad88"/><stop offset="1" stop-color="#cf8f68"/></radialGradient>
<linearGradient id="neckg" x1="0" y1="0" x2="1" y2="0"><stop offset="0" stop-color="#c98660"/><stop offset=".45" stop-color="#e3a882"/><stop offset="1" stop-color="#d29670"/></linearGradient>
<clipPath id="pc"><rect x="0" y="0" width="113" height="130.5"/></clipPath>
</defs>
<g clip-path="url(#pc)">
<polygon points="39.5,7.5 55.5,1.5 70.2,2.8 82.2,8.2 92.8,18.2 99.5,32.8 102.2,46.2 104.2,54.2 109.5,59.8 102.8,64.8 106.8,73.5 101.1,75.5 102.8,84.2 95.8,86.4 92.6,95.8 87.5,88.8 80.8,88.8 75.5,75.5 35.5,75.5 32.2,82.2 31.0,94.8 28.8,82.8 25.9,87.8 24.2,74.4 17.9,75.8 21.1,65.1 12.8,68.6 19.0,55.5 22.2,48.8 24.2,35.5 28.8,19.5" fill="#ebe2cb" filter="url(#b1)"/>
<polygon points="58.2,87.5 88.8,80.8 96.8,94.2 112.8,106.2 112.8,130.4 59.2,130.4 62.2,115.5 67.5,102.2" fill="url(#neckg)" filter="url(#b1)"/>
<ellipse cx="92" cy="122" rx="22" ry="14" fill="#f0c4a2" opacity=".7" filter="url(#b2)"/>
<polygon points="68.2,130.4 75.5,116.2 86.2,106.8 96.8,103.5 112.8,106.2 112.8,114.2 98.2,108.6 88.2,111.8 80.8,119.5 73.5,130.4" fill="#8d9296" filter="url(#b1)"/>
<polygon points="58.2,88.8 75.5,80.8 88.8,80.8 87.5,96.8 70.2,102.2 62.2,96.8" fill="#b9784f" opacity=".75" filter="url(#b2)"/>
<polygon points="34.2,46.2 39.5,39.5 55.5,32.8 70.2,30.2 75.5,51.5 77.1,70.2 72.2,83.5 64.8,89.5 55.5,92.2 48.2,90.4 39.5,82.2 33.2,70.2 30.8,55.5" fill="url(#sking)" filter="url(#b1)"/>
<polygon points="64.8,19.5 78.2,22.2 88.8,39.5 91.5,58.2 88.8,75.5 91.8,95.5 83.5,82.2 79.5,88.8 77.1,70.2 75.5,51.5 70.2,30.2" fill="url(#hairg)" filter="url(#b1)"/>
<polygon points="39.5,39.5 34.2,46.2 30.4,55.5 29.9,70.2 31.2,82.2 27.5,75.5 24.2,59.5 25.5,42.2 34.2,26.2 51.5,15.5 64.8,19.5 62.2,26.2 48.8,31.5" fill="#f5efdf" filter="url(#b1)"/>
<path d="M51.5,15.5 Q39.5,30.2 30.4,55.5" stroke="#dccfae" stroke-width="1.5" fill="none" filter="url(#b1)"/>
<path d="M75.5,22.2 Q87.5,48.8 87.5,80.8" stroke="#d8caa6" stroke-width="2" fill="none" filter="url(#b1)"/>
<path d="M64.8,19.5 Q74.2,35.5 76.3,59.5" stroke="#f7f1e0" stroke-width="2.5" fill="none" filter="url(#b1)"/>
<ellipse cx="36.8" cy="52.2" rx="3.9" ry="1.7" fill="#4a4540"/>
<ellipse cx="61.5" cy="51.5" rx="4" ry="1.8" fill="#4a4540"/>
<ellipse cx="37.9" cy="52.4" rx="1.3" ry="1.2" fill="#7f95a8"/>
<ellipse cx="60.8" cy="51.8" rx="1.4" ry="1.2" fill="#7f95a8"/>
<path d="M32.2,48.8 Q38.2,45.5 44.8,48.2 M54.2,46.8 Q62.2,44.2 70.2,46.8" stroke="#8d6040" stroke-width="1.5" fill="none" filter="url(#b1)"/>
<path d="M48.2,54.2 Q43.5,64.8 44.2,69.5 Q48.8,71.5 54.2,69.1" stroke="#c48860" stroke-width="1.6" fill="none" filter="url(#b1)"/>
<path d="M42.2,75.2 Q52.8,77.1 62.8,74.4 Q58.2,82.2 50.2,81.9 Q44.8,80.2 42.2,75.2Z" fill="#d98d84"/>
<path d="M45.1,76.3 Q52.8,77.6 60.6,75.6 Q54.2,79.8 45.1,76.3Z" fill="#f9efe8"/>
<ellipse cx="67.5" cy="64.8" rx="6" ry="8" fill="#eeb190" opacity=".8" filter="url(#b2)"/>
<path d="M13.5,68.6 L24.2,62.2 L19.5,78.4 L26.8,75.5 L31.8,94.8 L30.4,70.2Z" fill="#efe7d2" filter="url(#b1)"/>
</g></svg><div class="btn" style="left:500px;top:252px;width:128px">Výběr souboru</div><div class="a" style="left:24px;top:284px;width:604px;height:72px;border:1px solid #cfdcfa;background:#fafcff"></div><div class="t" style="left:31px;top:293px;">Popis</div><div class="a" style="left:33px;top:310px;width:586px;height:36.5px;border:1px solid #d6e0f5;background:#fff"></div><div class="a" style="left:34px;top:311px;width:584px;height:20px;background:linear-gradient(#fff,#e4ebf6)"></div><div class="a" style="left:34px;top:331px;width:584px;height:6px;background:#e9eef8"></div><div class="a" style="left:37px;top:315px;width:13px;height:14px;border:1px solid #d3dff5;background:#f5f8fe"></div><svg class="a" style="left:39px;top:318px" width="9" height="9"><path d="M1 0 V8 H9" fill="none" stroke="#1c3f7a" stroke-width="1.6"/></svg><svg class="a" style="left:58px;top:310.5px" width="12" height="26" viewBox="0 0 12 26"><path d="M0.5 0.5 H11.5 L6 8Z" fill="#b8b8b8" stroke="#888" stroke-width=".6"/><path d="M6 9 L11.5 16 H0.5Z" fill="#b8b8b8" stroke="#888" stroke-width=".6"/><rect x="0.5" y="17" width="11" height="8" fill="#b8b8b8" stroke="#888" stroke-width=".6"/></svg><svg class="a" style="left:583px;top:311px" width="12" height="9" viewBox="0 0 12 9"><path d="M0.5 0.5 H11.5 L6 8Z" fill="#b8b8b8" stroke="#888" stroke-width=".6"/></svg><div class="t" style="left:98.25px;top:315.5px;font-size:11.5px">1</div><div class="t" style="left:136.0px;top:315.5px;font-size:11.5px">2</div><div class="t" style="left:173.75px;top:315.5px;font-size:11.5px">3</div><div class="t" style="left:211.5px;top:315.5px;font-size:11.5px">4</div><div class="t" style="left:249.25px;top:315.5px;font-size:11.5px">5</div><div class="t" style="left:287.0px;top:315.5px;font-size:11.5px">6</div><div class="t" style="left:324.75px;top:315.5px;font-size:11.5px">7</div><div class="t" style="left:362.5px;top:315.5px;font-size:11.5px">8</div><div class="t" style="left:400.25px;top:315.5px;font-size:11.5px">9</div><div class="t" style="left:434.5px;top:315.5px;font-size:11.5px">10</div><div class="t" style="left:472.25px;top:315.5px;font-size:11.5px">11</div><div class="t" style="left:510.0px;top:315.5px;font-size:11.5px">12</div><div class="t" style="left:547.75px;top:315.5px;font-size:11.5px">13</div><svg class="a" style="left:34px;top:311px" width="584" height="20"><rect x="38.9" y="8.5" width="1" height="3.5" fill="#222"/><rect x="48.4" y="8.5" width="1" height="3.5" fill="#222"/><rect x="57.8" y="8.5" width="1" height="3.5" fill="#222"/><rect x="76.7" y="8.5" width="1" height="3.5" fill="#222"/><rect x="86.1" y="8.5" width="1" height="3.5" fill="#222"/><rect x="95.6" y="8.5" width="1" height="3.5" fill="#222"/><rect x="114.4" y="8.5" width="1" height="3.5" fill="#222"/><rect x="123.9" y="8.5" width="1" height="3.5" fill="#222"/><rect x="133.3" y="8.5" width="1" height="3.5" fill="#222"/><rect x="152.2" y="8.5" width="1" height="3.5" fill="#222"/><rect x="161.6" y="8.5" width="1" height="3.5" fill="#222"/><rect x="171.1" y="8.5" width="1" height="3.5" fill="#222"/><rect x="189.9" y="8.5" width="1" height="3.5" fill="#222"/><rect x="199.4" y="8.5" width="1" height="3.5" fill="#222"/><rect x="208.8" y="8.5" width="1" height="3.5" fill="#222"/><rect x="227.7" y="8.5" width="1" height="3.5" fill="#222"/><rect x="237.1" y="8.5" width="1" height="3.5" fill="#222"/><rect x="246.6" y="8.5" width="1" height="3.5" fill="#222"/><rect x="265.4" y="8.5" width="1" height="3.5" fill="#222"/><rect x="274.9" y="8.5" width="1" height="3.5" fill="#222"/><rect x="284.3" y="8.5" width="1" height="3.5" fill="#222"/><rect x="303.2" y="8.5" width="1" height="3.5" fill="#222"/><rect x="312.6" y="8.5" width="1" height="3.5" fill="#222"/><rect x="322.1" y="8.5" width="1" height="3.5" fill="#222"/><rect x="340.9" y="8.5" width="1" height="3.5" fill="#222"/><rect x="350.4" y="8.5" width="1" height="3.5" fill="#222"/><rect x="359.8" y="8.5" width="1" height="3.5" fill="#222"/><rect x="378.7" y="8.5" width="1" height="3.5" fill="#222"/><rect x="388.1" y="8.5" width="1" height="3.5" fill="#222"/><rect x="397.6" y="8.5" width="1" height="3.5" fill="#222"/><rect x="416.4" y="8.5" width="1" height="3.5" fill="#222"/><rect x="425.9" y="8.5" width="1" height="3.5" fill="#222"/><rect x="435.3" y="8.5" width="1" height="3.5" fill="#222"/><rect x="454.2" y="8.5" width="1" height="3.5" fill="#222"/><rect x="463.6" y="8.5" width="1" height="3.5" fill="#222"/><rect x="473.1" y="8.5" width="1" height="3.5" fill="#222"/><rect x="491.9" y="8.5" width="1" height="3.5" fill="#222"/><rect x="501.4" y="8.5" width="1" height="3.5" fill="#222"/><rect x="510.8" y="8.5" width="1" height="3.5" fill="#222"/><rect x="529.7" y="8.5" width="1" height="3.5" fill="#222"/><rect x="539.1" y="8.5" width="1" height="3.5" fill="#222"/><rect x="548.6" y="8.5" width="1" height="3.5" fill="#222"/></svg><div class="a" style="left:57.5px;top:337px;width:1px;height:9px;background:#c3d3f0"></div><svg class="a" style="left:605.5px;top:335.5px" width="8" height="6"><path d="M1 1 L4 4.5 L7 1" fill="none" stroke="#000" stroke-width="1.8"/></svg><svg class="a" style="left:46px;top:336px" width="4" height="4"><path d="M0 4 L4 0 V0 H1Z" fill="#000"/></svg><div class="a" style="left:24px;top:366px;width:604px;height:175px;border:1px solid #cfdcfa;background:#fafcff"></div><div class="t" style="left:31px;top:374px;">Spojení</div><div class="a" style="left:33px;top:394px;width:586px;height:96px;border:1px solid #d6e0f5;background:#fff"></div><div class="a hd" style="left:34px;top:395px;width:185px;height:18px;padding-top:2.5px">Spojení</div><div class="a hd" style="left:219px;top:395px;width:155px;height:18px;padding-top:2.5px">Typ spojení</div><div class="a hd" style="left:374px;top:395px;width:146.5px;height:18px;padding-top:2.5px">Typ spojení pro synchronizaci</div><div class="a hd" style="left:520.5px;top:395px;width:81.5px;height:18px;padding-top:2.5px">Obchodní par…</div><div class="a cell sel" style="left:34px;top:413px;width:185px;height:18px;">katerina.havlova@seznam.cz</div><div class="a cell sel" style="left:219px;top:413px;width:155px;height:18px;">E-mail</div><div class="a cell sel" style="left:374px;top:413px;width:146.5px;height:18px;"></div><div class="a cell sel" style="left:520.5px;top:413px;width:81.5px;height:18px;"></div><div class="a cell g1" style="left:34px;top:431px;width:185px;height:18px;">212-500-212</div><div class="a cell g1" style="left:219px;top:431px;width:155px;height:18px;">ICQ</div><div class="a cell" style="left:374px;top:431px;width:146.5px;height:18px;background:#f8fafe"></div><div class="a cell" style="left:520.5px;top:431px;width:81.5px;height:18px;background:#ccdcfb"></div><div class="a cell g2" style="left:34px;top:449px;width:185px;height:18px;">+420737703442</div><div class="a cell g2" style="left:219px;top:449px;width:155px;height:18px;">Mobil</div><div class="a cell" style="left:374px;top:449px;width:146.5px;height:18px;background:#fff">Mobilní</div><div class="a cell" style="left:520.5px;top:449px;width:81.5px;height:18px;background:#e1eafd"></div><div class="a" style="left:602px;top:395px;width:16.5px;height:72px;background:#f3f7fb"></div><div class="a" style="left:602px;top:413px;width:16.5px;height:18px;background:#d6e5f3"></div><svg class="a" style="left:605px;top:400px" width="10" height="7"><path d="M1 6 L5 1.5 L9 6" fill="none" stroke="#0a1a2a" stroke-width="2"/></svg><svg class="a" style="left:605px;top:460px" width="10" height="7"><path d="M1 1 L5 5.5 L9 1" fill="none" stroke="#0a1a2a" stroke-width="2"/></svg><div class="a" style="left:34px;top:472px;width:568px;height:17px;background:#f3f7fb"></div><div class="a" style="left:51px;top:472px;width:17px;height:17px;background:#d6e5f3"></div><svg class="a" style="left:38.5px;top:475.5px" width="7" height="10"><path d="M6 1 L1.5 5 L6 9" fill="none" stroke="#0a1a2a" stroke-width="2"/></svg><svg class="a" style="left:589px;top:475.5px" width="7" height="10"><path d="M1 1 L5.5 5 L1 9" fill="none" stroke="#0a1a2a" stroke-width="2"/></svg><div class="btn dis" style="left:492px;top:499px;width:128px">Distribuční seznamy</div><div class="btn" style="left:648px;top:84px;width:128px">Členství v org.</div><div class="btn" style="left:648px;top:112px;width:128px">Zařazení do skupin<i></i></div><div class="btn" style="left:648px;top:140px;width:128px">Organizace práce<i></i></div><div class="btn" style="left:648px;top:168px;width:128px">Kapacity,plán<i></i></div><div class="btn" style="left:648px;top:196px;width:128px">Organizační kalendář</div><div class="btn" style="left:648px;top:224px;width:128px">Personalistika<i></i></div><div class="btn" style="left:648px;top:252px;width:128px">Další osobní údaje<i></i></div><div class="btn" style="left:648px;top:292px;width:128px">Poznámky</div><div class="btn" style="left:648px;top:320px;width:128px">Přílohy</div><div class="btn" style="left:648px;top:348px;width:128px">Elektronické zprávy</div><div class="btn" style="left:648px;top:376px;width:128px">Rejstříky<i></i></div><div class="btn" style="left:648px;top:404px;width:128px">Souhrn informací</div><div class="btn" style="left:648px;top:501px;width:128px">Další operace<i></i></div><div class="btn" style="left:648px;top:531px;width:128px">Tisk</div><div class="a" style="left:0px;top:0px;width:1px;height:564px;background:#2f70a8"></div><div class="a" style="left:787px;top:0px;width:1px;height:564px;background:#2f70a8"></div><div class="a" style="left:0px;top:0px;width:788px;height:1px;background:#2f70a8"></div></div>
</body></html>
